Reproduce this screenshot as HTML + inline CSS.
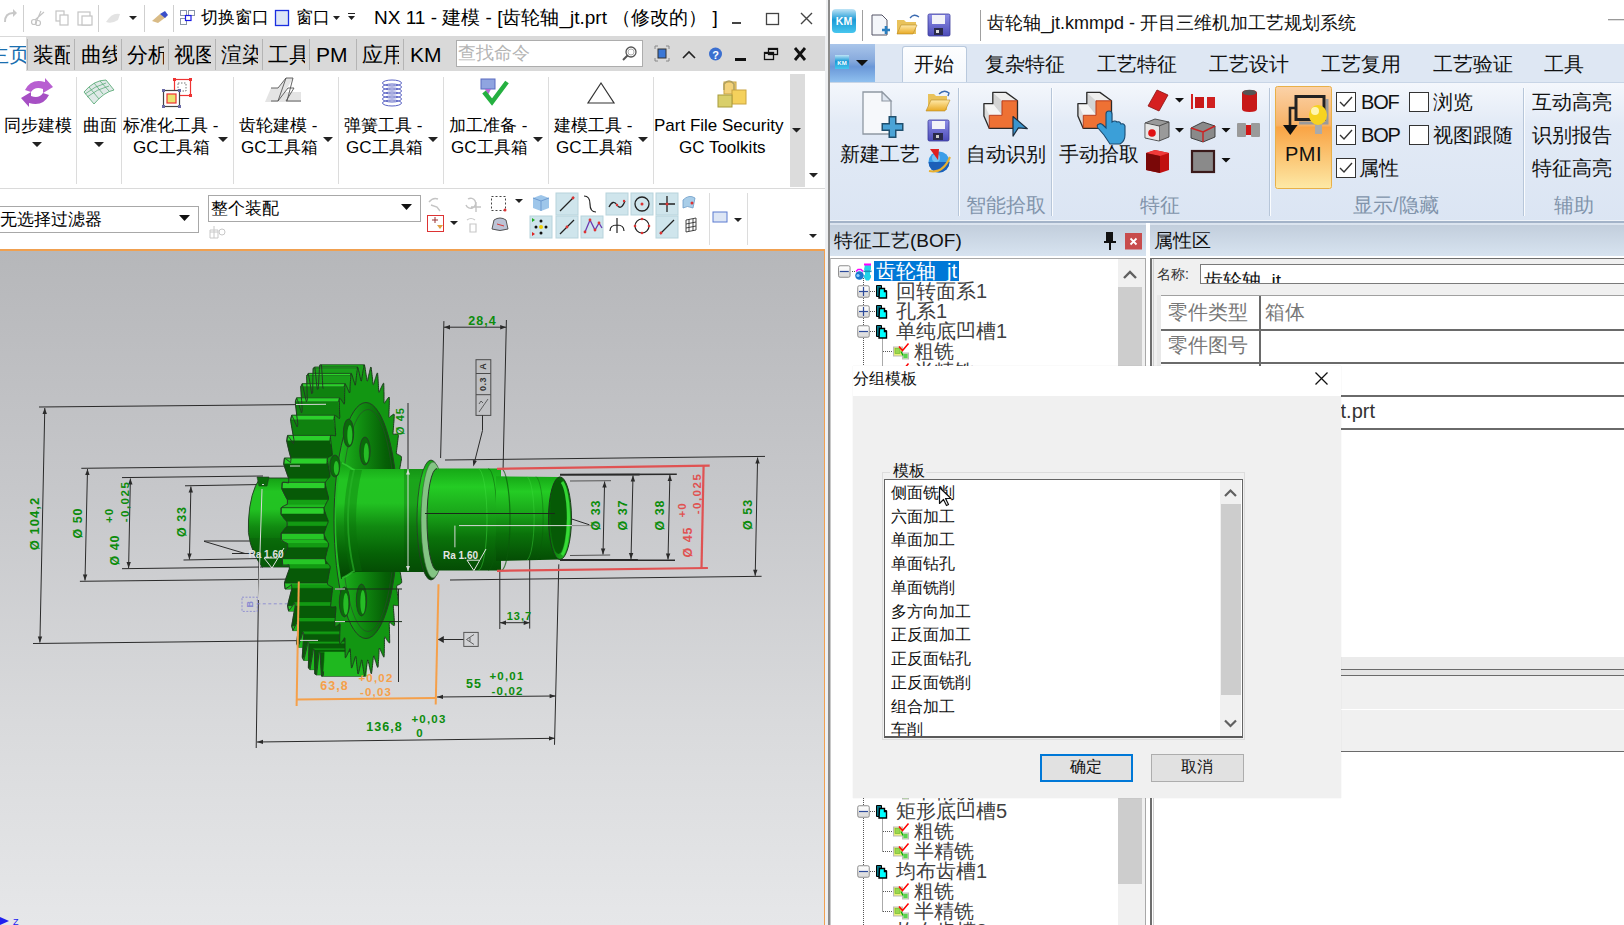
<!DOCTYPE html>
<html><head><meta charset="utf-8">
<style>
*{box-sizing:border-box;margin:0;padding:0}
html,body{width:1624px;height:925px;overflow:hidden;background:#fff;font-family:"Liberation Sans",sans-serif;color:#000}
.a{position:absolute}
.t{position:absolute;white-space:nowrap;line-height:1}
svg{position:absolute;overflow:visible}
</style></head><body>

<!-- ================= NX WINDOW ================= -->
<div class="a" id="nx" style="left:0;top:0;width:826px;height:925px;background:#fff;overflow:hidden">
  <!-- title bar -->
  <div class="a" style="left:0;top:0;width:826px;height:36px;background:#fff"></div>
  <!-- QAT icons -->
  <svg style="left:0;top:0" width="370" height="36">
    <g fill="none" stroke="#c8c8c8" stroke-width="2">
      <path d="M5 22 q0-9 8-9 l2 0" /><path d="M13 9 l4 4 -4 4" fill="#c8c8c8" stroke="none"/>
    </g>
    <g stroke="#cfcfcf" stroke-width="1">
      <line x1="23.5" y1="5" x2="23.5" y2="32"/><line x1="98.5" y1="5" x2="98.5" y2="32"/>
      <line x1="144.5" y1="5" x2="144.5" y2="32"/><line x1="173.5" y1="5" x2="173.5" y2="32"/>
    </g>
    <g fill="none" stroke="#c4c4c4" stroke-width="1.2">
      <circle cx="34" cy="22" r="2.5"/><circle cx="38" cy="23" r="2.5"/><path d="M35 20 L44 12 M37 20 L41 11"/>
      <rect x="56" y="11" width="8" height="10"/><rect x="60" y="15" width="8" height="10" fill="#fff"/>
      <rect x="78" y="12" width="12" height="13"/><rect x="82" y="16" width="10" height="9" fill="#fff"/>
    </g>
    <path d="M106 22 q6-10 14-8 l-2 6 q-6 4-12 2z" fill="#e3e3e3"/>
    <path d="M129 16 h8 l-4 4z" fill="#222"/>
    <path d="M152 21 l8-7 6 3 -8 6z" fill="#d9bb86"/><path d="M160 14 l5-3 3 4 -3 3z" fill="#3a4fc9"/>
    <g fill="#fff" stroke="#8a96a8" stroke-width="1"><rect x="180.5" y="10.5" width="6" height="5"/><rect x="188.5" y="10.5" width="6" height="5"/><rect x="180.5" y="18.5" width="6" height="6"/></g>
    <rect x="185.5" y="15.5" width="5.5" height="5" fill="#fff" stroke="#1a1ae6" stroke-width="1.2"/>
    <rect x="275.5" y="10.5" width="13" height="15" fill="#dde6f6" stroke="#1a2ee0" stroke-width="1.3"/>
    <path d="M333 16 h7 l-3.5 4z M348 13 h7 v1 h-7z M348 16 h7 l-3.5 4z" fill="#222"/>
  </svg>
  <div class="t" style="left:201px;top:9px;font-size:17px">切换窗口</div>
  <div class="t" style="left:296px;top:9px;font-size:17px">窗口</div>
  <div class="t" style="left:374px;top:8px;font-size:19px" id="nxtitle">NX 11 - 建模 - [齿轮轴_jt.prt （修改的） ]</div>
  <svg style="left:720px;top:0" width="106" height="36">
    <rect x="12" y="22" width="9" height="2" fill="#444"/>
    <rect x="46.5" y="13.5" width="12" height="11" fill="none" stroke="#444" stroke-width="1.3"/>
    <path d="M81 13 L92 24 M92 13 L81 24" stroke="#444" stroke-width="1.4"/>
  </svg>

  <!-- tabs -->
  <div class="a" style="left:0;top:36px;width:826px;height:35px;background:#d9d9d9"></div>
  <div class="a" style="left:0;top:37px;width:26px;height:34px;background:#fff"></div>
  <div class="t" style="left:-12px;top:44px;font-size:21px;color:#1a6fb0;width:38px;overflow:hidden">主页</div>
  <div id="nxtabs">
  <div class="t" style="left:33px;top:44px;font-size:21px;width:37px;overflow:hidden">装配</div>
  <div class="t" style="left:81px;top:44px;font-size:21px;width:36px;overflow:hidden">曲线</div>
  <div class="t" style="left:127px;top:44px;font-size:21px;width:37px;overflow:hidden">分析</div>
  <div class="t" style="left:174px;top:44px;font-size:21px;width:37px;overflow:hidden">视图</div>
  <div class="t" style="left:221px;top:44px;font-size:21px;width:37px;overflow:hidden">渲染</div>
  <div class="t" style="left:268px;top:44px;font-size:21px;width:37px;overflow:hidden">工具</div>
  <div class="t" style="left:316px;top:44px;font-size:21px;width:37px;overflow:hidden">PM</div>
  <div class="t" style="left:362px;top:44px;font-size:21px;width:37px;overflow:hidden">应用</div>
  <div class="t" style="left:410px;top:44px;font-size:21px;width:34px;overflow:hidden">KM</div>
  </div>
  <svg style="left:0;top:36px" width="460" height="35">
    <g stroke="#b4b4b4" stroke-width="1"><line x1="27.5" y1="3" x2="27.5" y2="34"/><line x1="74.5" y1="3" x2="74.5" y2="34"/><line x1="121.5" y1="3" x2="121.5" y2="34"/><line x1="168.5" y1="3" x2="168.5" y2="34"/><line x1="215.5" y1="3" x2="215.5" y2="34"/><line x1="262.5" y1="3" x2="262.5" y2="34"/><line x1="309.5" y1="3" x2="309.5" y2="34"/><line x1="356.5" y1="3" x2="356.5" y2="34"/><line x1="403.5" y1="3" x2="403.5" y2="34"/></g>
  </svg>
  <!-- search -->
  <div class="a" style="left:456px;top:40px;width:187px;height:27px;background:#fff;border:1px solid #adadad"></div>
  <div class="t" style="left:458px;top:44px;font-size:18px;color:#b4b4b4">查找命令</div>
  <svg style="left:620px;top:44px" width="20" height="20"><circle cx="11" cy="8" r="5" fill="none" stroke="#555" stroke-width="1.3"/><circle cx="11" cy="8" r="3" fill="none" stroke="#999" stroke-width="0.8"/><path d="M7.5 11.5 L3 16" stroke="#555" stroke-width="2"/></svg>
  <svg style="left:650px;top:40px" width="176" height="30">
    <g stroke="#888" stroke-width="1" fill="none"><path d="M5 7 h-0 v-0 M5 6 v3 M5 6 h3 M16 6 h3 v3 M5 18 v3 h3 M19 18 v3 h-3"/></g>
    <rect x="8" y="9" width="8" height="9" fill="#3a77d6" stroke="#333" stroke-width="1"/>
    <path d="M33 18 l6-6 6 6" fill="none" stroke="#222" stroke-width="1.6"/>
    <circle cx="65.5" cy="14" r="6.5" fill="#3b6fd0"/><text x="65.5" y="18.5" font-size="11" font-weight="bold" fill="#fff" text-anchor="middle" font-family="Liberation Sans">?</text>
    <rect x="85" y="18" width="11" height="3" fill="#111"/>
    <g fill="none" stroke="#111" stroke-width="1.3"><rect x="114.5" y="12.5" width="9" height="7"/><rect x="118.5" y="8.5" width="9" height="6"/></g><rect x="118" y="8" width="10" height="2" fill="#111"/><rect x="114" y="12" width="10" height="2" fill="#111"/>
    <path d="M145 8 L155 20 M155 8 L145 20" stroke="#111" stroke-width="2.8"/>
  </svg>

  <!-- ribbon separators -->
  <svg style="left:0;top:70px" width="826" height="120">
    <g stroke="#dcdcdc" stroke-width="1"><line x1="76.5" y1="7" x2="76.5" y2="114"/><line x1="121.5" y1="7" x2="121.5" y2="114"/><line x1="233.5" y1="7" x2="233.5" y2="114"/><line x1="338.5" y1="7" x2="338.5" y2="114"/><line x1="443.5" y1="7" x2="443.5" y2="114"/><line x1="548.5" y1="7" x2="548.5" y2="114"/><line x1="653.5" y1="7" x2="653.5" y2="114"/></g>
    <line x1="0" y1="118.5" x2="826" y2="118.5" stroke="#dadada"/>
    <rect x="790" y="4" width="15" height="113" fill="#dcdcdc"/>
    <g fill="#222"><path d="M32 72 h10 l-5 5z M94 72 h10 l-5 5z M218 67 h10 l-5 5z M323 67 h10 l-5 5z M428 67 h10 l-5 5z M533 67 h10 l-5 5z M638 67 h10 l-5 5z M792 58 h9 l-4.5 4.5z M809 103 h9 l-4.5 4.5z"/></g>
  </svg>
  <!-- ribbon icons -->
  <svg style="left:0;top:70px" width="790" height="50">
    <!-- sync arrows -->
    <path d="M25 20 q6-12 20-8 l0-4 8 9 -10 6 0-4 q-8-3-12 3z" fill="#b85fd1"/>
    <path d="M49 25 q-6 12-20 8 l0 4 -8-9 10-6 0 4 q8 3 12-3z" fill="#a64fc4"/>
    <!-- surface -->
    <path d="M84 22 q10-12 22-12 l8 10 q-10 2-20 14z" fill="#dfe9e7" stroke="#4aa36a" stroke-width="0.8"/>
    <g stroke="#4aa36a" stroke-width="0.7" fill="none"><path d="M89 17 l10 12 M94 13 l9 11 M100 11 l9 10 M87 27 q10-8 22-11 M85 24 q10-8 21-11"/></g>
    <!-- std tools -->
    <rect x="174.5" y="9.5" width="16" height="16" fill="#fff" stroke="#e33" stroke-width="1.2"/>
    <rect x="178" y="13" width="8" height="8" fill="none" stroke="#555" stroke-dasharray="1.5 1.5" stroke-width="0.8"/>
    <rect x="163.5" y="20.5" width="16" height="16" fill="#fff" stroke="#444" stroke-width="1.2"/>
    <rect x="167" y="24" width="9" height="9" fill="#eae36f" stroke="#e33" stroke-width="1.2"/>
    <g fill="#6a6aa6"><rect x="162" y="19" width="3" height="3"/><rect x="178" y="19" width="3" height="3"/><rect x="162" y="35" width="3" height="3"/><rect x="178" y="35" width="3" height="3"/></g>
    <g fill="#e33"><rect x="173" y="8" width="3" height="3"/><rect x="189" y="8" width="3" height="3"/><rect x="189" y="24" width="3" height="3"/></g>
    <!-- gear modelling -->
    <path d="M271 18 h7 l8-10 h7 l-8 14 h16 v10 h-36z" fill="#e4e4e4"/>
    <path d="M271 31 h7 l10-13 h6 l-8 13 h15 M271 18 h7 l8-10 h7" fill="none" stroke="#555" stroke-width="0.9"/>
    <path d="M286 8 l-8 23 M293 8 l-6 23" stroke="#555" stroke-width="0.9"/>
    <!-- spring -->
    <g fill="none" stroke="#5a63c4" stroke-width="1"><ellipse cx="392" cy="13" rx="9.5" ry="3"/><ellipse cx="392" cy="17" rx="9.5" ry="3"/><ellipse cx="392" cy="21" rx="9.5" ry="3"/><ellipse cx="392" cy="25" rx="9.5" ry="3"/><ellipse cx="392" cy="29" rx="9.5" ry="3"/><ellipse cx="392" cy="33" rx="9.5" ry="3"/></g>
    <!-- machining prep -->
    <rect x="481" y="9" width="14" height="10" fill="#8fa4e0" stroke="#5a6bc0"/>
    <path d="M485 19 h6 l-3 6z" fill="#b56ad6"/>
    <path d="M484 22 l8 10 l15-20" fill="none" stroke="#25b040" stroke-width="4.5"/>
    <!-- triangle -->
    <path d="M601 13 L614 33 H588z" fill="none" stroke="#333" stroke-width="1.2"/>
    <!-- lock -->
    <rect x="724" y="12" width="12" height="12" fill="#f3d27a" stroke="#c9a440"/>
    <rect x="732" y="20" width="14" height="14" fill="#f5d15c" stroke="#c9a440"/>
    <path d="M724 20 v-6 q5-6 10 0 v6" fill="none" stroke="#b0a060" stroke-width="1.5"/>
    <rect x="718" y="25" width="14" height="12" fill="#d9cf6a" stroke="#a89b3c"/>
  </svg>
  <div id="nxrib">
  <div class="t" style="left:4px;top:117px;font-size:17px">同步建模</div>
  <div class="t" style="left:83px;top:117px;font-size:17px">曲面</div>
  <div class="t" style="left:123px;top:117px;font-size:17px">标准化工具 -</div>
  <div class="t" style="left:133px;top:139px;font-size:17px">GC工具箱</div>
  <div class="t" style="left:239px;top:117px;font-size:17px">齿轮建模 -</div>
  <div class="t" style="left:241px;top:139px;font-size:17px">GC工具箱</div>
  <div class="t" style="left:344px;top:117px;font-size:17px">弹簧工具 -</div>
  <div class="t" style="left:346px;top:139px;font-size:17px">GC工具箱</div>
  <div class="t" style="left:449px;top:117px;font-size:17px">加工准备 -</div>
  <div class="t" style="left:451px;top:139px;font-size:17px">GC工具箱</div>
  <div class="t" style="left:554px;top:117px;font-size:17px">建模工具 -</div>
  <div class="t" style="left:556px;top:139px;font-size:17px">GC工具箱</div>
  <div class="t" style="left:654px;top:117px;font-size:17px">Part File Security</div>
  <div class="t" style="left:679px;top:139px;font-size:17px">GC Toolkits</div>
  </div>

  <!-- toolbar row 2 -->
  <div class="a" style="left:-2px;top:206px;width:201px;height:27px;background:#fff;border:1px solid #a8a8a8"></div>
  <div class="t" style="left:0px;top:211px;font-size:17px">无选择过滤器</div>
  <svg style="left:178px;top:214px" width="14" height="10"><path d="M1 1h11l-5.5 6z" fill="#111"/></svg>
  <div class="a" style="left:208px;top:195px;width:213px;height:27px;background:#fff;border:1px solid #a8a8a8"></div>
  <div class="t" style="left:211px;top:200px;font-size:17px">整个装配</div>
  <svg style="left:400px;top:203px" width="14" height="10"><path d="M1 1h11l-5.5 6z" fill="#111"/></svg>
  <svg style="left:200px;top:188px" width="626" height="62">
    <g fill="none" stroke="#c8c8c8" stroke-width="1"><path d="M10 42 h8 v8 h-8z M14 38 v12 M10 44 h8"/><circle cx="22" cy="44" r="3"/></g>
    <!-- row1 -->
    <g fill="none" stroke="#c4c4c4" stroke-width="1.4"><path d="M229 14 q4-5 9-3 M231 17 l6 2 l3 4"/><path d="M268 11 a5 5 0 1 1 -2 6 M276 14 v10 M271 19 h10"/></g>
    <rect x="291.5" y="8.5" width="14" height="14" fill="none" stroke="#444" stroke-dasharray="2 2"/><circle cx="305" cy="22" r="1.5" fill="#d33"/>
    <path d="M315 11h8l-4 4z" fill="#222"/>
    <path d="M333 10 l8-3 8 3 v10 l-8 3 -8-3z" fill="#9ec6ea"/><path d="M333 10 l8 3 8-3 M341 13 v10" stroke="#6e9bd1" fill="none"/>
    <rect x="356" y="5" width="22" height="22" fill="#cfe5ec" stroke="#b7d3dc"/>
    <path d="M360 23 L374 9" stroke="#222" stroke-width="1.2"/><circle cx="373" cy="10" r="1.4" fill="#d33"/>
    <path d="M384 8 q6 0 6 8 q0 8 6 8" fill="none" stroke="#222" stroke-width="1.2"/>
    <rect x="406" y="5" width="22" height="22" fill="#cfe5ec" stroke="#b7d3dc"/>
    <path d="M409 19 q4-8 8-2 t8-4" fill="none" stroke="#222" stroke-width="1.3"/><circle cx="417" cy="17" r="1.2" fill="#d33"/><circle cx="424" cy="13" r="1.2" fill="#d33"/>
    <rect x="431" y="5" width="22" height="22" fill="#cfe5ec" stroke="#b7d3dc"/>
    <circle cx="442" cy="16" r="7" fill="none" stroke="#222" stroke-width="1.3"/><circle cx="442" cy="16" r="1.5" fill="#d33"/>
    <rect x="456" y="5" width="22" height="22" fill="#cfe5ec" stroke="#b7d3dc"/>
    <path d="M467 8 v16 M459 16 h16" stroke="#222" stroke-width="1.3"/><circle cx="467" cy="16" r="1.5" fill="#d33"/>
    <path d="M483 12 q6-6 12-2 l-2 10 q-6-3-10 0z" fill="#a8cde8" stroke="#6a9bc8" stroke-width="0.8"/><circle cx="492" cy="15" r="1.5" fill="#d33"/>
    <!-- row2 -->
    <rect x="227.5" y="27.5" width="16" height="16" fill="none" stroke="#d33" stroke-width="1"/>
    <path d="M232 32 h6 M235 29 v6" stroke="#933" stroke-width="1"/><path d="M237 37 h6 l-3 4z" fill="#e0a040"/>
    <path d="M250 33h8l-4 4z" fill="#222"/>
    <g fill="none" stroke="#c8c8c8" stroke-width="1.2"><path d="M267 32 q4-3 8 0 M270 36 h6 v8 h-6z"/></g>
    <path d="M292 41 l2-9 q6-4 12 0 l2 9 q-8 3-16 0z" fill="#bcc3d6" stroke="#555" stroke-width="1"/><path d="M297 36 l7 2" stroke="#d33"/>
    <rect x="330" y="28" width="22" height="22" fill="#cfe5ec" stroke="#b7d3dc"/>
    <g fill="#111"><circle cx="341" cy="33" r="1.5"/><circle cx="336" cy="39" r="1.5"/><circle cx="346" cy="39" r="1.5"/><circle cx="341" cy="45" r="1.5"/></g><circle cx="341" cy="39" r="2" fill="#f0d000"/><path d="M332 30 l3 2 -3 2z" fill="#2a2"/><path d="M332 44 l3 2 -3 2z" fill="#d22"/>
    <rect x="356" y="28" width="22" height="22" fill="#cfe5ec" stroke="#b7d3dc"/>
    <path d="M360 46 L374 32" stroke="#222" stroke-width="1.2"/><circle cx="367" cy="39" r="1.4" fill="#d33"/>
    <rect x="381" y="28" width="22" height="22" fill="#cfe5ec" stroke="#b7d3dc"/>
    <path d="M385 44 l5-12 5 10 4-7 3 5" fill="none" stroke="#6a3ab0" stroke-width="1.3"/><g fill="#d33"><circle cx="385" cy="44" r="1.4"/><circle cx="390" cy="32" r="1.4"/><circle cx="395" cy="42" r="1.4"/><circle cx="399" cy="35" r="1.4"/></g>
    <path d="M410 43 q0-6 7-6 q7 0 7 6 M417 30 v15" fill="none" stroke="#222" stroke-width="1.2"/>
    <circle cx="442" cy="38" r="7" fill="none" stroke="#222" stroke-width="1.2"/><g fill="#d33"><circle cx="442" cy="31" r="1.3"/><circle cx="435" cy="38" r="1.3"/><circle cx="449" cy="38" r="1.3"/><circle cx="442" cy="45" r="1.3"/></g>
    <rect x="456" y="28" width="22" height="22" fill="#cfe5ec" stroke="#b7d3dc"/>
    <path d="M460 46 L474 32" stroke="#222" stroke-width="1.2"/><circle cx="461" cy="45" r="1.4" fill="#d33"/>
    <g fill="none" stroke="#333" stroke-width="0.9"><path d="M486 32 l10 -2 v12 l-10 2z M486 36 l10-2 M486 40 l10-2 M489 31 v12 M493 31 v12"/></g>
    <line x1="509.5" y1="5" x2="509.5" y2="57" stroke="#dcdcdc"/>
    <rect x="513" y="24" width="14" height="10" fill="#dde6f5" stroke="#5a7ad0"/>
    <path d="M534 30h8l-4 4z" fill="#222"/>
    <line x1="547.5" y1="5" x2="547.5" y2="57" stroke="#dcdcdc"/>
    <path d="M609 46h8l-4 4z" fill="#222"/>
  </svg>
  <!-- viewport -->
  <svg style="left:0;top:251px" width="824" height="674" viewBox="0 251 824 674">
  <rect x="0" y="251" width="824" height="674" fill="url(#vpbg)"/>
  <g id="dimsb">
<line x1="39.0" y1="407.0" x2="330.0" y2="404.3" stroke="#2a2a2a" stroke-width="1.0"/>
<line x1="33.0" y1="643.5" x2="320.0" y2="640.4" stroke="#2a2a2a" stroke-width="1.0"/>
<line x1="44.8" y1="408.0" x2="39.9" y2="642.5" stroke="#2a2a2a" stroke-width="1.0"/>
<path d="M44.8 408.0 L46.9 414.0 L42.5 414.0z" fill="#2a2a2a"/>
<path d="M39.9 642.5 L37.8 636.5 L42.2 636.5z" fill="#2a2a2a"/>
<line x1="81.3" y1="468.3" x2="300.0" y2="466.0" stroke="#2a2a2a" stroke-width="1.0"/>
<line x1="79.9" y1="581.3" x2="300.0" y2="579.0" stroke="#2a2a2a" stroke-width="1.0"/>
<line x1="87.5" y1="469.0" x2="85.0" y2="580.5" stroke="#2a2a2a" stroke-width="1.0"/>
<path d="M87.5 469.0 L89.6 475.0 L85.2 474.9z" fill="#2a2a2a"/>
<path d="M85.0 580.5 L82.9 574.5 L87.3 574.6z" fill="#2a2a2a"/>
<line x1="122.0" y1="477.6" x2="263.0" y2="476.0" stroke="#2a2a2a" stroke-width="1.0"/>
<line x1="122.0" y1="568.7" x2="263.0" y2="567.0" stroke="#2a2a2a" stroke-width="1.0"/>
<line x1="130.4" y1="478.5" x2="128.6" y2="568.0" stroke="#2a2a2a" stroke-width="1.0"/>
<path d="M130.4 478.5 L132.5 484.5 L128.1 484.5z" fill="#2a2a2a"/>
<path d="M128.6 568.0 L126.5 562.0 L130.9 562.0z" fill="#2a2a2a"/>
<line x1="185.0" y1="485.8" x2="262.0" y2="484.5" stroke="#2a2a2a" stroke-width="1.0"/>
<line x1="183.5" y1="560.0" x2="262.0" y2="558.5" stroke="#2a2a2a" stroke-width="1.0"/>
<line x1="190.9" y1="486.5" x2="189.4" y2="559.5" stroke="#2a2a2a" stroke-width="1.0"/>
<path d="M190.9 486.5 L193.0 492.5 L188.6 492.5z" fill="#2a2a2a"/>
<path d="M189.4 559.5 L187.3 553.5 L191.7 553.5z" fill="#2a2a2a"/>
<line x1="204.0" y1="541.3" x2="245.0" y2="553.5" stroke="#2a2a2a" stroke-width="1.0"/>
<line x1="204.0" y1="541.0" x2="268.0" y2="541.0" stroke="#2a2a2a" stroke-width="1.0"/>
<line x1="232.0" y1="553.5" x2="262.0" y2="553.5" stroke="#2a2a2a" stroke-width="1.0"/>
<line x1="260.0" y1="489.0" x2="256.2" y2="748.0" stroke="#2a2a2a" stroke-width="1.0"/>
<line x1="257.0" y1="742.0" x2="555.0" y2="738.3" stroke="#2a2a2a" stroke-width="1.0"/>
<path d="M257.0 742.0 L263.0 739.7 L263.0 744.1z" fill="#2a2a2a"/>
<path d="M555.0 738.3 L549.0 740.6 L549.0 736.2z" fill="#2a2a2a"/>
<line x1="558.8" y1="564.3" x2="554.5" y2="744.8" stroke="#2a2a2a" stroke-width="1.0"/>
<line x1="437.0" y1="697.0" x2="555.6" y2="696.0" stroke="#2a2a2a" stroke-width="1.0"/>
<path d="M437.0 697.0 L443.0 694.7 L443.0 699.1z" fill="#2a2a2a"/>
<path d="M555.6 696.0 L549.6 698.3 L549.6 693.9z" fill="#2a2a2a"/>
<path d="M437.8 639.5 L443.8 636.0 L443.8 643.0z" fill="#2a2a2a"/>
<line x1="437.8" y1="639.5" x2="463.8" y2="639.5" stroke="#2a2a2a" stroke-width="1.0"/>
<rect x="463.8" y="632.4" width="14.4" height="14" fill="none" stroke="#555" stroke-width="1"/>
<path d="M474 634.5 L466.5 639.5 474 644.5 M470 637.5 v4" fill="none" stroke="#555" stroke-width="0.9"/>
<line x1="499.8" y1="561.0" x2="499.8" y2="629.0" stroke="#2a2a2a" stroke-width="1.0"/>
<line x1="529.7" y1="558.0" x2="529.7" y2="628.6" stroke="#2a2a2a" stroke-width="1.0"/>
<line x1="500.0" y1="622.7" x2="529.7" y2="622.7" stroke="#2a2a2a" stroke-width="1.0"/>
<path d="M500.0 622.7 L506.0 620.5 L506.0 624.9z" fill="#2a2a2a"/>
<path d="M529.7 622.7 L523.7 624.9 L523.7 620.5z" fill="#2a2a2a"/>
<line x1="443.9" y1="321.1" x2="440.6" y2="458.0" stroke="#2a2a2a" stroke-width="1.0"/>
<line x1="506.4" y1="320.0" x2="503.1" y2="468.0" stroke="#2a2a2a" stroke-width="1.0"/>
<line x1="444.0" y1="327.2" x2="506.2" y2="327.2" stroke="#2a2a2a" stroke-width="1.0"/>
<path d="M444.0 327.2 L450.0 325.0 L450.0 329.4z" fill="#2a2a2a"/>
<path d="M506.2 327.2 L500.2 329.4 L500.2 325.0z" fill="#2a2a2a"/>
<rect x="476" y="359.7" width="14.8" height="55.7" fill="none" stroke="#4a4a4a" stroke-width="1"/>
<line x1="476.0" y1="373.5" x2="490.8" y2="373.5" stroke="#4a4a4a" stroke-width="1.0"/>
<line x1="476.0" y1="394.7" x2="490.8" y2="394.7" stroke="#4a4a4a" stroke-width="1.0"/>
<text x="483.4" y="366.6" transform="rotate(-90 483.4 366.6)" fill="#333" font-size="9" font-family="Liberation Sans" font-weight="bold" text-anchor="middle" dominant-baseline="central" letter-spacing="0">A</text>
<text x="483.4" y="384.1" transform="rotate(-90 483.4 384.1)" fill="#333" font-size="9" font-family="Liberation Sans" font-weight="bold" text-anchor="middle" dominant-baseline="central" letter-spacing="0.5">0.3</text>
<path d="M479 412 L488 399 M479 404 l2 -3 2 2" fill="none" stroke="#444" stroke-width="0.8"/>
<path d="M482.5 415.4 L482.5 430.5 L474.5 462" fill="none" stroke="#2a2a2a" stroke-width="1"/>
<path d="M473.3 466.4 L472.9 460.1 L476.8 461.1z" fill="#2a2a2a"/>
<line x1="445.0" y1="460.0" x2="765.0" y2="456.4" stroke="#2a2a2a" stroke-width="1.0"/>
<line x1="450.0" y1="580.0" x2="761.6" y2="576.3" stroke="#2a2a2a" stroke-width="1.0"/>
<line x1="757.6" y1="457.5" x2="755.2" y2="575.8" stroke="#2a2a2a" stroke-width="1.0"/>
<path d="M757.6 457.5 L759.7 463.5 L755.3 463.5z" fill="#2a2a2a"/>
<path d="M755.2 575.8 L753.1 569.8 L757.5 569.8z" fill="#2a2a2a"/>
<line x1="560.0" y1="474.6" x2="676.8" y2="474.3" stroke="#2a2a2a" stroke-width="1.6"/>
<line x1="560.0" y1="560.2" x2="675.0" y2="560.2" stroke="#2a2a2a" stroke-width="1.6"/>
<line x1="669.9" y1="475.0" x2="668.0" y2="559.5" stroke="#2a2a2a" stroke-width="1.0"/>
<path d="M669.9 475.0 L672.0 481.0 L667.6 480.9z" fill="#2a2a2a"/>
<path d="M668.0 559.5 L665.9 553.5 L670.3 553.6z" fill="#2a2a2a"/>
<line x1="560.0" y1="474.8" x2="639.6" y2="474.6" stroke="#2a2a2a" stroke-width="1.6"/>
<line x1="560.0" y1="559.9" x2="637.9" y2="559.7" stroke="#2a2a2a" stroke-width="1.6"/>
<line x1="633.0" y1="475.5" x2="631.0" y2="559.0" stroke="#2a2a2a" stroke-width="1.0"/>
<path d="M633.0 475.5 L635.1 481.6 L630.7 481.4z" fill="#2a2a2a"/>
<path d="M631.0 559.0 L628.9 552.9 L633.3 553.1z" fill="#2a2a2a"/>
<line x1="570.0" y1="481.0" x2="611.0" y2="480.7" stroke="#555" stroke-width="1.0"/>
<line x1="570.0" y1="555.5" x2="610.2" y2="555.0" stroke="#555" stroke-width="1.0"/>
<line x1="604.6" y1="481.5" x2="603.0" y2="554.5" stroke="#2a2a2a" stroke-width="1.0"/>
<path d="M604.6 481.5 L606.7 487.5 L602.3 487.5z" fill="#2a2a2a"/>
<path d="M603.0 554.5 L600.9 548.5 L605.3 548.5z" fill="#2a2a2a"/>
<line x1="555.0" y1="513.5" x2="589.4" y2="524.8" stroke="#2a2a2a" stroke-width="1.0"/>
<line x1="572.0" y1="525.6" x2="598.0" y2="525.6" stroke="#888" stroke-width="1"/>
<line x1="408.0" y1="403.0" x2="408.0" y2="469.0" stroke="#2a2a2a" stroke-width="1.0"/>
<line x1="398.5" y1="589.0" x2="398.5" y2="682.0" stroke="#2a2a2a" stroke-width="1.0"/>
<rect x="242" y="597.2" width="15.3" height="14.2" fill="none" stroke="#8a8ad0" stroke-width="0.9" stroke-dasharray="2 1.5"/>
<text x="249.6" y="604.3" transform="rotate(-90 249.6 604.3)" fill="#8a8ad0" font-size="9" font-family="Liberation Sans" font-weight="bold" text-anchor="middle" dominant-baseline="central" letter-spacing="0">B</text>
<line x1="257.3" y1="603.8" x2="292" y2="603.8" stroke="#8a8ad0" stroke-width="0.9" stroke-dasharray="3 2.5"/>
  </g>
  <g id="model">
<defs>
<linearGradient id="cyl" x1="0" y1="0" x2="0" y2="1">
 <stop offset="0" stop-color="#14a014"/><stop offset="0.15" stop-color="#22c422"/><stop offset="0.35" stop-color="#22c222"/>
 <stop offset="0.55" stop-color="#118a11"/><stop offset="0.78" stop-color="#066206"/><stop offset="1" stop-color="#034503"/>
</linearGradient>
<linearGradient id="cyl2" x1="0" y1="0" x2="0" y2="1">
 <stop offset="0" stop-color="#16a816"/><stop offset="0.18" stop-color="#24cc24"/><stop offset="0.42" stop-color="#1aa81a"/>
 <stop offset="0.68" stop-color="#0a720a"/><stop offset="1" stop-color="#044c04"/>
</linearGradient>
<linearGradient id="web" x1="0" y1="0" x2="1" y2="0">
 <stop offset="0" stop-color="#23c023"/><stop offset="0.35" stop-color="#139613"/><stop offset="0.8" stop-color="#066006"/><stop offset="1" stop-color="#055005"/>
</linearGradient>
<linearGradient id="endin" x1="0" y1="0" x2="1" y2="1">
 <stop offset="0" stop-color="#045004"/><stop offset="0.55" stop-color="#0a7a0a"/><stop offset="1" stop-color="#30d030"/>
</linearGradient>
<linearGradient id="vpbg" x1="0" y1="0" x2="0" y2="1">
 <stop offset="0" stop-color="#b6b7ba"/><stop offset="0.35" stop-color="#c6c7ca"/><stop offset="0.7" stop-color="#d9dadc"/><stop offset="1" stop-color="#e6e7e9"/>
</linearGradient>
</defs>
<path d="M266 478 L305 478 L305 567 L262 567 Q246 545 248.5 520 Q250 492 260 478z" fill="url(#cyl)" stroke="#233a23" stroke-width="0.9"/>
<path d="M257 477 l12 0 -2 9 -8 0z" fill="#0a6a0a" stroke="#233a23" stroke-width="0.6"/>
<path d="M249 538 L305 538 L305 567 L262 567z" fill="#0a650a" opacity="0.6"/>
<path d="M323.3 388.5 L323.0 388.5 L322.7 385.6 L322.5 380.4 L322.2 375.3 L321.8 370.1 L321.5 365.0 L321.1 365.0 L320.8 365.0 L320.4 365.1 L320.1 365.1 L319.7 365.5 L319.4 369.6 L319.2 373.8 L318.9 378.0 L318.7 382.1 L318.4 386.3 L318.2 388.9 L317.9 389.0 L317.6 389.2 L317.3 389.3 L316.9 386.4 L316.4 381.5 L315.9 376.6 L315.4 371.7 L314.8 367.1 L314.5 367.4 L314.1 367.6 L313.8 367.9 L313.4 368.1 L313.1 368.9 L313.0 373.2 L312.9 377.5 L312.8 381.8 L312.8 386.0 L312.7 390.3 L312.6 392.8 L312.3 393.1 L312.0 393.4 L311.7 393.8 L311.2 390.9 L310.5 386.4 L309.8 381.9 L309.0 377.4 L308.3 373.5 L308.0 373.9 L307.6 374.4 L307.3 374.8 L307.0 375.3 L306.7 376.5 L306.8 380.8 L306.9 385.1 L307.0 389.4 L307.1 393.6 L307.3 397.9 L307.2 400.2 L307.0 400.7 L306.7 401.2 L306.4 401.7 L305.7 399.0 L304.8 394.9 L303.9 391.0 L303.0 387.0 L302.2 383.8 L301.9 384.5 L301.6 385.2 L301.2 385.8 L300.9 386.5 L300.8 388.0 L301.0 392.2 L301.3 396.4 L301.6 400.5 L301.9 404.6 L302.2 408.7 L302.2 410.9 L302.0 411.6 L301.8 412.2 L301.5 412.9 L300.7 410.4 L299.6 407.0 L298.6 403.6 L297.5 400.3 L296.6 398.0 L296.3 398.8 L296.0 399.7 L295.7 400.5 L295.5 401.4 L295.4 403.1 L295.8 407.1 L296.3 411.1 L296.7 415.0 L297.2 418.8 L297.7 422.6 L297.8 424.6 L297.6 425.4 L297.4 426.2 L297.2 427.0 L296.2 424.9 L295.0 422.2 L293.8 419.6 L292.6 417.0 L291.6 415.4 L291.4 416.5 L291.2 417.5 L290.9 418.5 L290.7 419.5 L290.8 421.4 L291.4 425.1 L292.0 428.7 L292.6 432.2 L293.2 435.7 L293.9 439.2 L294.0 441.0 L293.8 441.9 L293.6 442.8 L293.5 443.7 L292.4 442.1 L291.1 440.2 L289.8 438.4 L288.5 436.6 L287.5 435.8 L287.3 436.9 L287.2 438.1 L287.0 439.3 L286.8 440.4 L287.0 442.4 L287.7 445.6 L288.5 448.8 L289.2 451.9 L290.0 454.9 L290.8 457.9 L291.0 459.5 L290.8 460.5 L290.7 461.5 L290.6 462.6 L289.3 461.6 L288.0 460.5 L286.6 459.5 L285.3 458.6 L284.4 458.5 L284.2 459.7 L284.1 461.0 L283.9 462.2 L283.8 463.5 L284.1 465.4 L285.0 468.1 L285.9 470.7 L286.8 473.3 L287.7 475.8 L288.6 478.2 L288.8 479.7 L288.7 480.8 L288.6 481.9 L288.5 483.0 L287.2 482.7 L285.8 482.5 L284.4 482.3 L283.0 482.3 L282.2 482.9 L282.1 484.2 L282.0 485.5 L282.0 486.8 L281.9 488.2 L282.3 489.9 L283.3 492.0 L284.3 494.0 L285.3 496.0 L286.3 497.9 L287.3 499.7 L287.5 501.0 L287.4 502.1 L287.4 503.2 L287.3 504.4 L285.9 504.9 L284.6 505.6 L283.2 506.3 L281.9 507.2 L281.1 508.3 L281.1 509.7 L281.1 511.0 L281.1 512.4 L281.0 513.7 L281.6 515.2 L282.7 516.6 L283.7 518.0 L284.8 519.3 L285.9 520.5 L286.9 521.7 L287.1 522.8 L287.1 524.0 L287.1 525.1 L287.0 526.3 L285.7 527.7 L284.4 529.2 L283.1 530.8 L281.8 532.5 L281.2 534.1 L281.2 535.4 L281.2 536.8 L281.3 538.1 L281.3 539.5 L282.0 540.5 L283.1 541.2 L284.2 541.9 L285.3 542.5 L286.4 543.0 L287.5 543.5 L287.7 544.6 L287.7 545.7 L287.8 546.9 L287.7 548.1 L286.4 550.4 L285.2 552.7 L284.0 555.1 L282.7 557.6 L282.3 559.4 L282.4 560.7 L282.5 562.1 L282.6 563.4 L282.7 564.7 L283.4 565.2 L284.6 565.2 L285.7 565.2 L286.8 565.1 L287.9 564.9 L289.0 564.7 L289.2 565.7 L289.3 566.8 L289.4 567.9 L289.2 569.3 L288.1 572.3 L287.0 575.4 L285.9 578.5 L284.8 581.8 L284.5 583.7 L284.6 585.0 L284.8 586.2 L284.9 587.4 L285.1 588.7 L285.9 588.6 L287.0 587.9 L288.1 587.2 L289.2 586.4 L290.3 585.5 L291.4 584.6 L291.5 585.6 L291.7 586.6 L291.8 587.6 L291.7 589.2 L290.7 592.9 L289.8 596.6 L288.8 600.4 L287.9 604.3 L287.7 606.3 L287.9 607.5 L288.1 608.6 L288.3 609.7 L288.5 610.8 L289.4 610.1 L290.5 608.7 L291.5 607.3 L292.6 605.8 L293.6 604.2 L294.6 602.8 L294.7 603.7 L294.9 604.6 L295.1 605.5 L295.0 607.3 L294.2 611.5 L293.4 615.8 L292.7 620.2 L291.9 624.6 L291.9 626.6 L292.1 627.5 L292.4 628.5 L292.6 629.5 L292.9 630.5 L293.7 629.0 L294.7 627.0 L295.7 624.9 L296.7 622.8 L297.6 620.6 L298.5 618.7 L298.7 619.5 L298.9 620.3 L299.1 621.0 L299.1 623.1 L298.5 627.8 L297.9 632.5 L297.3 637.3 L296.7 642.2 L296.8 643.9 L297.1 644.7 L297.4 645.5 L297.7 646.3 L298.0 647.1 L298.8 645.0 L299.7 642.4 L300.6 639.7 L301.4 637.0 L302.3 634.2 L303.0 632.0 L303.3 632.6 L303.5 633.2 L303.8 633.8 L303.8 636.1 L303.4 641.1 L303.0 646.2 L302.6 651.3 L302.3 656.4 L302.5 657.8 L302.8 658.4 L303.1 659.1 L303.4 659.7 L303.7 660.3 L304.5 657.5 L305.2 654.3 L306.0 651.1 L306.7 647.9 L307.4 644.6 L308.0 642.2 L308.3 642.6 L308.6 643.1 L308.9 643.5 L309.0 646.0 L308.8 651.2 L308.6 656.5 L308.5 661.7 L308.4 667.0 L308.6 668.0 L309.0 668.4 L309.3 668.8 L309.7 669.2 L310.0 669.6 L310.6 666.2 L311.2 662.6 L311.8 658.9 L312.4 655.3 L313.0 651.6 L313.5 649.0 L313.8 649.3 L314.0 649.5 L314.3 649.8 L314.5 652.5 L314.6 657.8 L314.6 663.0 L314.7 668.3 L314.8 673.6 L315.2 674.1 L315.5 674.3 L315.9 674.5 L316.2 674.7 L316.6 674.8 L317.0 670.8 L317.5 666.9 L317.9 662.9 L318.3 659.0 L318.7 655.0 L319.1 652.4 L319.4 652.4 L319.7 652.5 L320.0 652.5 L320.3 655.4 L320.5 660.6 L320.8 665.7 L321.2 670.9 L321.5 676.0 L321.9 676.0 L322.2 676.0 L322.6 675.9 L322.9 675.9 L323.3 675.5 L323.6 671.4 L364.5 676.0 L364.5 365.0z" fill="#0a5a0a"/>
<path d="M324.0 388.7 L323.7 388.6 L323.4 388.5 L323.2 388.5 L322.9 388.4 L365.9 388.4 L366.2 388.5 L366.4 388.5 L366.7 388.6 L367.0 388.7z" fill="#15a015" stroke="#15a015" stroke-width="0.4"/>
<path d="M322.9 388.4 L322.6 383.7 L322.4 379.0 L322.1 374.3 L321.8 369.7 L321.5 365.0 L364.5 365.0 L364.8 369.7 L365.1 374.3 L365.4 379.0 L365.6 383.7 L365.9 388.4z" fill="#1fb81f" stroke="#1fb81f" stroke-width="0.4"/>
<path d="M321.5 365.0 L321.2 365.0 L320.8 365.0 L320.5 365.1 L320.1 365.1 L319.8 365.1 L362.8 365.1 L363.1 365.1 L363.5 365.1 L363.8 365.0 L364.2 365.0 L364.5 365.0z" fill="#2bd02b" stroke="#1c3a1c" stroke-width="0.8"/>
<path d="M319.8 365.1 L319.5 369.1 L319.2 373.0 L319.0 377.0 L318.7 381.0 L318.5 384.9 L318.3 388.9 L361.3 388.9 L361.5 384.9 L361.7 381.0 L362.0 377.0 L362.2 373.0 L362.5 369.1 L362.8 365.1z" fill="#1a9e1a" stroke="#1a9e1a" stroke-width="0.4"/>
<path d="M318.3 388.9 L318.0 389.0 L317.8 389.1 L317.5 389.2 L317.2 389.4 L360.2 389.4 L360.5 389.2 L360.8 389.1 L361.0 389.0 L361.3 388.9z" fill="#15a015" stroke="#15a015" stroke-width="0.4"/>
<path d="M317.2 389.4 L316.8 384.9 L316.3 380.4 L315.8 376.0 L315.3 371.5 L314.8 367.1 L357.8 367.1 L358.3 371.5 L358.8 376.0 L359.3 380.4 L359.8 384.9 L360.2 389.4z" fill="#1fb81f" stroke="#1fb81f" stroke-width="0.4"/>
<path d="M314.8 367.1 L314.5 367.3 L314.1 367.6 L313.8 367.8 L313.5 368.1 L313.1 368.4 L356.1 368.4 L356.5 368.1 L356.8 367.8 L357.1 367.6 L357.5 367.3 L357.8 367.1z" fill="#2bd02b" stroke="#1c3a1c" stroke-width="0.8"/>
<path d="M313.1 368.4 L313.0 372.4 L312.9 376.5 L312.8 380.6 L312.8 384.6 L312.7 388.7 L312.7 392.7 L355.7 392.7 L355.7 388.7 L355.8 384.6 L355.8 380.6 L355.9 376.5 L356.0 372.4 L356.1 368.4z" fill="#1a9e1a" stroke="#1a9e1a" stroke-width="0.4"/>
<path d="M312.7 392.7 L312.4 393.0 L312.2 393.3 L311.9 393.6 L311.6 393.9 L354.6 393.9 L354.9 393.6 L355.2 393.3 L355.4 393.0 L355.7 392.7z" fill="#15a015" stroke="#15a015" stroke-width="0.4"/>
<path d="M311.6 393.9 L311.0 389.7 L310.4 385.6 L309.7 381.5 L309.0 377.5 L308.3 373.4 L351.3 373.4 L352.0 377.5 L352.7 381.5 L353.4 385.6 L354.0 389.7 L354.6 393.9z" fill="#1fb81f" stroke="#1fb81f" stroke-width="0.4"/>
<path d="M308.3 373.4 L308.0 373.9 L307.7 374.3 L307.4 374.8 L307.0 375.2 L306.7 375.7 L349.7 375.7 L350.0 375.2 L350.4 374.8 L350.7 374.3 L351.0 373.9 L351.3 373.4z" fill="#2bd02b" stroke="#1c3a1c" stroke-width="0.8"/>
<path d="M306.7 375.7 L306.8 379.8 L306.9 383.9 L307.0 387.9 L307.1 392.0 L307.2 396.0 L307.4 400.0 L350.4 400.0 L350.2 396.0 L350.1 392.0 L350.0 387.9 L349.9 383.9 L349.8 379.8 L349.7 375.7z" fill="#1a9e1a" stroke="#1a9e1a" stroke-width="0.4"/>
<path d="M307.4 400.0 L307.1 400.4 L306.8 400.9 L306.6 401.4 L306.3 401.9 L349.3 401.9 L349.6 401.4 L349.8 400.9 L350.1 400.4 L350.4 400.0z" fill="#15a015" stroke="#15a015" stroke-width="0.4"/>
<path d="M306.3 401.9 L305.5 398.1 L304.7 394.5 L303.9 390.9 L303.1 387.3 L302.2 383.7 L345.2 383.7 L346.1 387.3 L346.9 390.9 L347.7 394.5 L348.5 398.1 L349.3 401.9z" fill="#1fb81f" stroke="#1fb81f" stroke-width="0.4"/>
<path d="M302.2 383.7 L301.9 384.4 L301.6 385.0 L301.3 385.7 L301.0 386.4 L300.7 387.0 L343.7 387.0 L344.0 386.4 L344.3 385.7 L344.6 385.0 L344.9 384.4 L345.2 383.7z" fill="#2bd02b" stroke="#1c3a1c" stroke-width="0.8"/>
<path d="M300.7 387.0 L301.0 391.0 L301.2 395.0 L301.5 398.9 L301.8 402.8 L302.1 406.7 L302.4 410.6 L345.4 410.6 L345.1 406.7 L344.8 402.8 L344.5 398.9 L344.2 395.0 L344.0 391.0 L343.7 387.0z" fill="#0f820f" stroke="#0f820f" stroke-width="0.4"/>
<path d="M302.4 410.6 L302.2 411.2 L301.9 411.8 L301.7 412.4 L301.5 413.1 L344.5 413.1 L344.7 412.4 L344.9 411.8 L345.2 411.2 L345.4 410.6z" fill="#15a015" stroke="#15a015" stroke-width="0.4"/>
<path d="M301.5 413.1 L300.5 409.9 L299.6 406.8 L298.6 403.7 L297.6 400.7 L296.6 397.8 L339.6 397.8 L340.6 400.7 L341.6 403.7 L342.6 406.8 L343.5 409.9 L344.5 413.1z" fill="#1fb81f" stroke="#1fb81f" stroke-width="0.4"/>
<path d="M296.6 397.8 L296.4 398.6 L296.1 399.4 L295.8 400.3 L295.5 401.1 L295.3 402.0 L338.3 402.0 L338.5 401.1 L338.8 400.3 L339.1 399.4 L339.4 398.6 L339.6 397.8z" fill="#2bd02b" stroke="#1c3a1c" stroke-width="0.8"/>
<path d="M295.3 402.0 L295.7 405.8 L296.1 409.5 L296.5 413.2 L297.0 416.9 L297.5 420.5 L297.9 424.1 L340.9 424.1 L340.5 420.5 L340.0 416.9 L339.5 413.2 L339.1 409.5 L338.7 405.8 L338.3 402.0z" fill="#0f820f" stroke="#0f820f" stroke-width="0.4"/>
<path d="M297.9 424.1 L297.7 424.9 L297.5 425.7 L297.3 426.4 L297.1 427.2 L340.1 427.2 L340.3 426.4 L340.5 425.7 L340.7 424.9 L340.9 424.1z" fill="#15a015" stroke="#15a015" stroke-width="0.4"/>
<path d="M297.1 427.2 L296.1 424.7 L295.0 422.2 L293.9 419.8 L292.8 417.5 L291.7 415.2 L334.7 415.2 L335.8 417.5 L336.9 419.8 L338.0 422.2 L339.1 424.7 L340.1 427.2z" fill="#1fb81f" stroke="#1fb81f" stroke-width="0.4"/>
<path d="M291.7 415.2 L291.5 416.2 L291.2 417.2 L291.0 418.2 L290.8 419.2 L290.6 420.2 L333.6 420.2 L333.8 419.2 L334.0 418.2 L334.2 417.2 L334.5 416.2 L334.7 415.2z" fill="#2bd02b" stroke="#1c3a1c" stroke-width="0.8"/>
<path d="M290.6 420.2 L291.1 423.7 L291.7 427.1 L292.3 430.5 L292.9 433.8 L293.5 437.1 L294.1 440.4 L337.1 440.4 L336.5 437.1 L335.9 433.8 L335.3 430.5 L334.7 427.1 L334.1 423.7 L333.6 420.2z" fill="#0f820f" stroke="#0f820f" stroke-width="0.4"/>
<path d="M294.1 440.4 L294.0 441.2 L293.8 442.1 L293.6 443.0 L293.5 443.9 L336.5 443.9 L336.6 443.0 L336.8 442.1 L337.0 441.2 L337.1 440.4z" fill="#15a015" stroke="#15a015" stroke-width="0.4"/>
<path d="M293.5 443.9 L292.3 442.1 L291.1 440.3 L290.0 438.6 L288.8 437.0 L287.6 435.4 L330.6 435.4 L331.8 437.0 L333.0 438.6 L334.1 440.3 L335.3 442.1 L336.5 443.9z" fill="#1fb81f" stroke="#1fb81f" stroke-width="0.4"/>
<path d="M287.6 435.4 L287.4 436.6 L287.2 437.7 L287.0 438.8 L286.9 440.0 L286.7 441.1 L329.7 441.1 L329.9 440.0 L330.0 438.8 L330.2 437.7 L330.4 436.6 L330.6 435.4z" fill="#2bd02b" stroke="#1c3a1c" stroke-width="0.8"/>
<path d="M286.7 441.1 L287.4 444.2 L288.1 447.2 L288.8 450.2 L289.6 453.1 L290.3 455.9 L291.1 458.7 L334.1 458.7 L333.3 455.9 L332.6 453.1 L331.8 450.2 L331.1 447.2 L330.4 444.2 L329.7 441.1z" fill="#075a07" stroke="#075a07" stroke-width="0.4"/>
<path d="M291.1 458.7 L290.9 459.7 L290.8 460.7 L290.7 461.7 L290.5 462.6 L333.5 462.6 L333.7 461.7 L333.8 460.7 L333.9 459.7 L334.1 458.7z" fill="#15a015" stroke="#15a015" stroke-width="0.4"/>
<path d="M290.5 462.6 L289.3 461.6 L288.1 460.6 L286.9 459.7 L285.7 458.8 L284.4 458.0 L327.4 458.0 L328.7 458.8 L329.9 459.7 L331.1 460.6 L332.3 461.6 L333.5 462.6z" fill="#1fb81f" stroke="#1fb81f" stroke-width="0.4"/>
<path d="M284.4 458.0 L284.3 459.3 L284.1 460.5 L284.0 461.7 L283.9 463.0 L283.7 464.2 L326.7 464.2 L326.9 463.0 L327.0 461.7 L327.1 460.5 L327.3 459.3 L327.4 458.0z" fill="#2bd02b" stroke="#1c3a1c" stroke-width="0.8"/>
<path d="M283.7 464.2 L284.6 466.8 L285.4 469.3 L286.3 471.8 L287.1 474.2 L288.0 476.5 L288.8 478.8 L331.8 478.8 L331.0 476.5 L330.1 474.2 L329.3 471.8 L328.4 469.3 L327.6 466.8 L326.7 464.2z" fill="#075a07" stroke="#075a07" stroke-width="0.4"/>
<path d="M288.8 478.8 L288.7 479.9 L288.7 480.9 L288.6 481.9 L288.5 483.0 L331.5 483.0 L331.6 481.9 L331.7 480.9 L331.7 479.9 L331.8 478.8z" fill="#15a015" stroke="#15a015" stroke-width="0.4"/>
<path d="M288.5 483.0 L287.2 482.7 L286.0 482.5 L284.7 482.4 L283.5 482.3 L282.2 482.3 L325.2 482.3 L326.5 482.3 L327.7 482.4 L329.0 482.5 L330.2 482.7 L331.5 483.0z" fill="#1fb81f" stroke="#1fb81f" stroke-width="0.4"/>
<path d="M282.2 482.3 L282.2 483.6 L282.1 484.9 L282.0 486.2 L281.9 487.5 L281.8 488.8 L324.8 488.8 L324.9 487.5 L325.0 486.2 L325.1 484.9 L325.2 483.6 L325.2 482.3z" fill="#2bd02b" stroke="#1c3a1c" stroke-width="0.8"/>
<path d="M281.8 488.8 L282.8 490.9 L283.7 492.8 L284.6 494.7 L285.6 496.6 L286.5 498.3 L287.5 500.0 L330.5 500.0 L329.5 498.3 L328.6 496.6 L327.6 494.7 L326.7 492.8 L325.8 490.9 L324.8 488.8z" fill="#075a07" stroke="#075a07" stroke-width="0.4"/>
<path d="M287.5 500.0 L287.4 501.1 L287.4 502.2 L287.4 503.3 L287.3 504.4 L330.3 504.4 L330.4 503.3 L330.4 502.2 L330.4 501.1 L330.5 500.0z" fill="#15a015" stroke="#15a015" stroke-width="0.4"/>
<path d="M287.3 504.4 L286.1 504.9 L284.9 505.5 L283.6 506.1 L282.4 506.9 L281.1 507.7 L324.1 507.7 L325.4 506.9 L326.6 506.1 L327.9 505.5 L329.1 504.9 L330.3 504.4z" fill="#1fb81f" stroke="#1fb81f" stroke-width="0.4"/>
<path d="M281.1 507.7 L281.1 509.0 L281.1 510.3 L281.1 511.7 L281.0 513.0 L281.0 514.3 L324.0 514.3 L324.0 513.0 L324.1 511.7 L324.1 510.3 L324.1 509.0 L324.1 507.7z" fill="#2bd02b" stroke="#1c3a1c" stroke-width="0.8"/>
<path d="M281.0 514.3 L282.0 515.7 L283.0 517.1 L284.0 518.4 L285.1 519.6 L286.1 520.7 L287.1 521.8 L330.1 521.8 L329.1 520.7 L328.1 519.6 L327.0 518.4 L326.0 517.1 L325.0 515.7 L324.0 514.3z" fill="#075a07" stroke="#075a07" stroke-width="0.4"/>
<path d="M287.1 521.8 L287.1 522.9 L287.1 524.0 L287.1 525.1 L287.1 526.2 L330.1 526.2 L330.1 525.1 L330.1 524.0 L330.1 522.9 L330.1 521.8z" fill="#139a13" stroke="#139a13" stroke-width="0.4"/>
<path d="M287.1 526.2 L285.9 527.5 L284.7 528.8 L283.5 530.3 L282.3 531.8 L281.1 533.3 L324.1 533.3 L325.3 531.8 L326.5 530.3 L327.7 528.8 L328.9 527.5 L330.1 526.2z" fill="#075a07" stroke="#075a07" stroke-width="0.4"/>
<path d="M281.1 533.3 L281.2 534.7 L281.2 536.0 L281.2 537.3 L281.3 538.7 L281.3 540.0 L324.3 540.0 L324.3 538.7 L324.2 537.3 L324.2 536.0 L324.2 534.7 L324.1 533.3z" fill="#26c626" stroke="#1c3a1c" stroke-width="0.8"/>
<path d="M281.3 540.0 L282.4 540.7 L283.4 541.4 L284.5 542.1 L285.5 542.6 L286.6 543.1 L287.6 543.5 L330.6 543.5 L329.6 543.1 L328.5 542.6 L327.5 542.1 L326.4 541.4 L325.4 540.7 L324.3 540.0z" fill="#1fb81f" stroke="#1fb81f" stroke-width="0.4"/>
<path d="M287.6 543.5 L287.7 544.6 L287.7 545.7 L287.8 546.8 L287.8 547.8 L330.8 547.8 L330.8 546.8 L330.7 545.7 L330.7 544.6 L330.6 543.5z" fill="#139a13" stroke="#139a13" stroke-width="0.4"/>
<path d="M287.8 547.8 L286.7 549.9 L285.6 552.0 L284.5 554.1 L283.3 556.4 L282.2 558.7 L325.2 558.7 L326.3 556.4 L327.5 554.1 L328.6 552.0 L329.7 549.9 L330.8 547.8z" fill="#075a07" stroke="#075a07" stroke-width="0.4"/>
<path d="M282.2 558.7 L282.3 560.0 L282.4 561.3 L282.5 562.5 L282.6 563.8 L282.7 565.1 L325.7 565.1 L325.6 563.8 L325.5 562.5 L325.4 561.3 L325.3 560.0 L325.2 558.7z" fill="#26c626" stroke="#1c3a1c" stroke-width="0.8"/>
<path d="M282.7 565.1 L283.8 565.2 L284.8 565.2 L285.9 565.2 L286.9 565.1 L288.0 564.9 L289.1 564.7 L332.1 564.7 L331.0 564.9 L329.9 565.1 L328.9 565.2 L327.8 565.2 L326.8 565.2 L325.7 565.1z" fill="#1fb81f" stroke="#1fb81f" stroke-width="0.4"/>
<path d="M289.1 564.7 L289.1 565.7 L289.2 566.7 L289.3 567.7 L289.5 568.8 L332.5 568.8 L332.3 567.7 L332.2 566.7 L332.1 565.7 L332.1 564.7z" fill="#139a13" stroke="#139a13" stroke-width="0.4"/>
<path d="M289.5 568.8 L288.4 571.5 L287.4 574.2 L286.4 577.1 L285.4 580.0 L284.4 583.0 L327.4 583.0 L328.4 580.0 L329.4 577.1 L330.4 574.2 L331.4 571.5 L332.5 568.8z" fill="#075a07" stroke="#075a07" stroke-width="0.4"/>
<path d="M284.4 583.0 L284.6 584.2 L284.7 585.4 L284.8 586.6 L285.0 587.8 L285.1 589.0 L328.1 589.0 L328.0 587.8 L327.8 586.6 L327.7 585.4 L327.6 584.2 L327.4 583.0z" fill="#26c626" stroke="#1c3a1c" stroke-width="0.8"/>
<path d="M285.1 589.0 L286.2 588.4 L287.2 587.8 L288.3 587.1 L289.3 586.3 L290.4 585.5 L291.4 584.6 L334.4 584.6 L333.4 585.5 L332.3 586.3 L331.3 587.1 L330.2 587.8 L329.2 588.4 L328.1 589.0z" fill="#1fb81f" stroke="#1fb81f" stroke-width="0.4"/>
<path d="M291.4 584.6 L291.5 585.5 L291.7 586.5 L291.8 587.4 L292.0 588.3 L335.0 588.3 L334.8 587.4 L334.7 586.5 L334.5 585.5 L334.4 584.6z" fill="#139a13" stroke="#139a13" stroke-width="0.4"/>
<path d="M292.0 588.3 L291.1 591.7 L290.2 595.1 L289.3 598.5 L288.4 602.0 L287.6 605.6 L330.6 605.6 L331.4 602.0 L332.3 598.5 L333.2 595.1 L334.1 591.7 L335.0 588.3z" fill="#075a07" stroke="#075a07" stroke-width="0.4"/>
<path d="M287.6 605.6 L287.8 606.7 L288.0 607.8 L288.2 608.9 L288.4 610.0 L288.6 611.1 L331.6 611.1 L331.4 610.0 L331.2 608.9 L331.0 607.8 L330.8 606.7 L330.6 605.6z" fill="#26c626" stroke="#1c3a1c" stroke-width="0.8"/>
<path d="M288.6 611.1 L289.6 609.8 L290.6 608.5 L291.6 607.1 L292.6 605.7 L293.6 604.2 L294.5 602.7 L337.5 602.7 L336.6 604.2 L335.6 605.7 L334.6 607.1 L333.6 608.5 L332.6 609.8 L331.6 611.1z" fill="#1fb81f" stroke="#1fb81f" stroke-width="0.4"/>
<path d="M294.5 602.7 L294.7 603.6 L294.9 604.4 L295.1 605.3 L295.3 606.1 L338.3 606.1 L338.1 605.3 L337.9 604.4 L337.7 603.6 L337.5 602.7z" fill="#139a13" stroke="#139a13" stroke-width="0.4"/>
<path d="M295.3 606.1 L294.5 609.9 L293.8 613.8 L293.1 617.8 L292.4 621.8 L291.7 625.8 L334.7 625.8 L335.4 621.8 L336.1 617.8 L336.8 613.8 L337.5 609.9 L338.3 606.1z" fill="#075a07" stroke="#075a07" stroke-width="0.4"/>
<path d="M291.7 625.8 L291.9 626.8 L292.2 627.8 L292.4 628.7 L292.7 629.7 L292.9 630.6 L335.9 630.6 L335.7 629.7 L335.4 628.7 L335.2 627.8 L334.9 626.8 L334.7 625.8z" fill="#26c626" stroke="#1c3a1c" stroke-width="0.8"/>
<path d="M292.9 630.6 L293.9 628.8 L294.8 626.8 L295.7 624.9 L296.6 622.8 L297.5 620.8 L298.4 618.6 L341.4 618.6 L340.5 620.8 L339.6 622.8 L338.7 624.9 L337.8 626.8 L336.9 628.8 L335.9 630.6z" fill="#1fb81f" stroke="#1fb81f" stroke-width="0.4"/>
<path d="M298.4 618.6 L298.6 619.4 L298.9 620.1 L299.1 620.8 L299.3 621.5 L342.3 621.5 L342.1 620.8 L341.9 620.1 L341.6 619.4 L341.4 618.6z" fill="#139a13" stroke="#139a13" stroke-width="0.4"/>
<path d="M299.3 621.5 L298.7 625.8 L298.2 630.1 L297.6 634.4 L297.1 638.8 L296.6 643.2 L339.6 643.2 L340.1 638.8 L340.6 634.4 L341.2 630.1 L341.7 625.8 L342.3 621.5z" fill="#075a07" stroke="#075a07" stroke-width="0.4"/>
<path d="M296.6 643.2 L296.9 644.0 L297.2 644.8 L297.5 645.6 L297.7 646.4 L298.0 647.2 L341.0 647.2 L340.7 646.4 L340.5 645.6 L340.2 644.8 L339.9 644.0 L339.6 643.2z" fill="#26c626" stroke="#1c3a1c" stroke-width="0.8"/>
<path d="M298.0 647.2 L298.9 644.8 L299.7 642.3 L300.5 639.7 L301.4 637.2 L302.2 634.5 L303.0 631.9 L346.0 631.9 L345.2 634.5 L344.4 637.2 L343.5 639.7 L342.7 642.3 L341.9 644.8 L341.0 647.2z" fill="#1fb81f" stroke="#1fb81f" stroke-width="0.4"/>
<path d="M303.0 631.9 L303.2 632.4 L303.4 633.0 L303.7 633.6 L303.9 634.2 L346.9 634.2 L346.7 633.6 L346.4 633.0 L346.2 632.4 L346.0 631.9z" fill="#139a13" stroke="#139a13" stroke-width="0.4"/>
<path d="M303.9 634.2 L303.6 638.7 L303.2 643.3 L302.9 647.9 L302.5 652.6 L302.2 657.3 L345.2 657.3 L345.5 652.6 L345.9 647.9 L346.2 643.3 L346.6 638.7 L346.9 634.2z" fill="#075a07" stroke="#075a07" stroke-width="0.4"/>
<path d="M302.2 657.3 L302.5 657.9 L302.8 658.5 L303.1 659.1 L303.5 659.7 L303.8 660.3 L346.8 660.3 L346.5 659.7 L346.1 659.1 L345.8 658.5 L345.5 657.9 L345.2 657.3z" fill="#26c626" stroke="#1c3a1c" stroke-width="0.8"/>
<path d="M303.8 660.3 L304.5 657.4 L305.2 654.4 L305.9 651.3 L306.6 648.3 L307.3 645.2 L308.0 642.1 L351.0 642.1 L350.3 645.2 L349.6 648.3 L348.9 651.3 L348.2 654.4 L347.5 657.4 L346.8 660.3z" fill="#1fb81f" stroke="#1fb81f" stroke-width="0.4"/>
<path d="M308.0 642.1 L308.2 642.5 L308.5 642.9 L308.8 643.3 L309.0 643.7 L352.0 643.7 L351.8 643.3 L351.5 642.9 L351.2 642.5 L351.0 642.1z" fill="#139a13" stroke="#139a13" stroke-width="0.4"/>
<path d="M309.0 643.7 L308.9 648.5 L308.7 653.2 L308.6 658.0 L308.4 662.8 L308.3 667.6 L351.3 667.6 L351.4 662.8 L351.6 658.0 L351.7 653.2 L351.9 648.5 L352.0 643.7z" fill="#075a07" stroke="#075a07" stroke-width="0.4"/>
<path d="M308.3 667.6 L308.7 668.0 L309.0 668.4 L309.3 668.8 L309.7 669.2 L310.0 669.6 L353.0 669.6 L352.7 669.2 L352.3 668.8 L352.0 668.4 L351.7 668.0 L351.3 667.6z" fill="#26c626" stroke="#1c3a1c" stroke-width="0.8"/>
<path d="M310.0 669.6 L310.6 666.2 L311.2 662.8 L311.8 659.4 L312.3 655.9 L312.9 652.5 L313.4 648.9 L356.4 648.9 L355.9 652.5 L355.3 655.9 L354.8 659.4 L354.2 662.8 L353.6 666.2 L353.0 669.6z" fill="#1fb81f" stroke="#1fb81f" stroke-width="0.4"/>
<path d="M313.4 648.9 L313.7 649.2 L313.9 649.4 L314.2 649.7 L314.5 649.9 L357.5 649.9 L357.2 649.7 L356.9 649.4 L356.7 649.2 L356.4 648.9z" fill="#139a13" stroke="#139a13" stroke-width="0.4"/>
<path d="M314.5 649.9 L314.5 654.7 L314.6 659.5 L314.6 664.3 L314.7 669.1 L314.8 673.9 L357.8 673.9 L357.7 669.1 L357.6 664.3 L357.6 659.5 L357.5 654.7 L357.5 649.9z" fill="#075a07" stroke="#075a07" stroke-width="0.4"/>
<path d="M314.8 673.9 L315.2 674.1 L315.5 674.3 L315.9 674.5 L316.2 674.7 L316.6 674.8 L359.6 674.8 L359.2 674.7 L358.9 674.5 L358.5 674.3 L358.2 674.1 L357.8 673.9z" fill="#26c626" stroke="#1c3a1c" stroke-width="0.8"/>
<path d="M316.6 674.8 L317.0 671.1 L317.4 667.4 L317.9 663.7 L318.2 659.9 L318.6 656.1 L319.0 652.3 L362.0 652.3 L361.6 656.1 L361.2 659.9 L360.9 663.7 L360.4 667.4 L360.0 671.1 L359.6 674.8z" fill="#1fb81f" stroke="#1fb81f" stroke-width="0.4"/>
<path d="M319.0 652.3 L319.3 652.4 L319.6 652.5 L319.8 652.5 L320.1 652.6 L363.1 652.6 L362.8 652.5 L362.6 652.5 L362.3 652.4 L362.0 652.3z" fill="#139a13" stroke="#139a13" stroke-width="0.4"/>
<path d="M320.1 652.6 L320.4 657.3 L320.6 662.0 L320.9 666.7 L321.2 671.3 L321.5 676.0 L364.5 676.0 L364.2 671.3 L363.9 666.7 L363.6 662.0 L363.4 657.3 L363.1 652.6z" fill="#075a07" stroke="#075a07" stroke-width="0.4"/>
<path d="M321.5 676.0 L321.8 676.0 L322.2 676.0 L322.5 675.9 L322.9 675.9 L323.2 675.9 L366.2 675.9 L365.9 675.9 L365.5 675.9 L365.2 676.0 L364.8 676.0 L364.5 676.0z" fill="#26c626" stroke="#1c3a1c" stroke-width="0.8"/>
<path d="M323.2 675.9 L323.5 671.9 L323.8 668.0 L324.0 664.0 L324.3 660.0 L324.5 656.1 L324.7 652.1 L367.7 652.1 L367.5 656.1 L367.3 660.0 L367.0 664.0 L366.8 668.0 L366.5 671.9 L366.2 675.9z" fill="#1fb81f" stroke="#1fb81f" stroke-width="0.4"/>
<path d="M323.3 388.5 L323.0 388.5 L322.7 385.6 L322.5 380.4 L322.2 375.3 L321.8 370.1 L321.5 365.0 L321.1 365.0 L320.8 365.0 L320.4 365.1 L320.1 365.1 L319.7 365.5 L319.4 369.6 L319.2 373.8 L318.9 378.0 L318.7 382.1 L318.4 386.3 L318.2 388.9 L317.9 389.0 L317.6 389.2 L317.3 389.3 L316.9 386.4 L316.4 381.5 L315.9 376.6 L315.4 371.7 L314.8 367.1 L314.5 367.4 L314.1 367.6 L313.8 367.9 L313.4 368.1 L313.1 368.9 L313.0 373.2 L312.9 377.5 L312.8 381.8 L312.8 386.0 L312.7 390.3 L312.6 392.8 L312.3 393.1 L312.0 393.4 L311.7 393.8 L311.2 390.9 L310.5 386.4 L309.8 381.9 L309.0 377.4 L308.3 373.5 L308.0 373.9 L307.6 374.4 L307.3 374.8 L307.0 375.3 L306.7 376.5 L306.8 380.8 L306.9 385.1 L307.0 389.4 L307.1 393.6 L307.3 397.9 L307.2 400.2 L307.0 400.7 L306.7 401.2 L306.4 401.7 L305.7 399.0 L304.8 394.9 L303.9 391.0 L303.0 387.0 L302.2 383.8 L301.9 384.5 L301.6 385.2 L301.2 385.8 L300.9 386.5 L300.8 388.0 L301.0 392.2 L301.3 396.4 L301.6 400.5 L301.9 404.6 L302.2 408.7 L302.2 410.9 L302.0 411.6 L301.8 412.2 L301.5 412.9 L300.7 410.4 L299.6 407.0 L298.6 403.6 L297.5 400.3 L296.6 398.0 L296.3 398.8 L296.0 399.7 L295.7 400.5 L295.5 401.4 L295.4 403.1 L295.8 407.1 L296.3 411.1 L296.7 415.0 L297.2 418.8 L297.7 422.6 L297.8 424.6 L297.6 425.4 L297.4 426.2 L297.2 427.0 L296.2 424.9 L295.0 422.2 L293.8 419.6 L292.6 417.0 L291.6 415.4 L291.4 416.5 L291.2 417.5 L290.9 418.5 L290.7 419.5 L290.8 421.4 L291.4 425.1 L292.0 428.7 L292.6 432.2 L293.2 435.7 L293.9 439.2 L294.0 441.0 L293.8 441.9 L293.6 442.8 L293.5 443.7 L292.4 442.1 L291.1 440.2 L289.8 438.4 L288.5 436.6 L287.5 435.8 L287.3 436.9 L287.2 438.1 L287.0 439.3 L286.8 440.4 L287.0 442.4 L287.7 445.6 L288.5 448.8 L289.2 451.9 L290.0 454.9 L290.8 457.9 L291.0 459.5 L290.8 460.5 L290.7 461.5 L290.6 462.6 L289.3 461.6 L288.0 460.5 L286.6 459.5 L285.3 458.6 L284.4 458.5 L284.2 459.7 L284.1 461.0 L283.9 462.2 L283.8 463.5 L284.1 465.4 L285.0 468.1 L285.9 470.7 L286.8 473.3 L287.7 475.8 L288.6 478.2 L288.8 479.7 L288.7 480.8 L288.6 481.9 L288.5 483.0 L287.2 482.7 L285.8 482.5 L284.4 482.3 L283.0 482.3 L282.2 482.9 L282.1 484.2 L282.0 485.5 L282.0 486.8 L281.9 488.2 L282.3 489.9 L283.3 492.0 L284.3 494.0 L285.3 496.0 L286.3 497.9 L287.3 499.7 L287.5 501.0 L287.4 502.1 L287.4 503.2 L287.3 504.4 L285.9 504.9 L284.6 505.6 L283.2 506.3 L281.9 507.2 L281.1 508.3 L281.1 509.7 L281.1 511.0 L281.1 512.4 L281.0 513.7 L281.6 515.2 L282.7 516.6 L283.7 518.0 L284.8 519.3 L285.9 520.5 L286.9 521.7 L287.1 522.8 L287.1 524.0 L287.1 525.1 L287.0 526.3 L285.7 527.7 L284.4 529.2 L283.1 530.8 L281.8 532.5 L281.2 534.1 L281.2 535.4 L281.2 536.8 L281.3 538.1 L281.3 539.5 L282.0 540.5 L283.1 541.2 L284.2 541.9 L285.3 542.5 L286.4 543.0 L287.5 543.5 L287.7 544.6 L287.7 545.7 L287.8 546.9 L287.7 548.1 L286.4 550.4 L285.2 552.7 L284.0 555.1 L282.7 557.6 L282.3 559.4 L282.4 560.7 L282.5 562.1 L282.6 563.4 L282.7 564.7 L283.4 565.2 L284.6 565.2 L285.7 565.2 L286.8 565.1 L287.9 564.9 L289.0 564.7 L289.2 565.7 L289.3 566.8 L289.4 567.9 L289.2 569.3 L288.1 572.3 L287.0 575.4 L285.9 578.5 L284.8 581.8 L284.5 583.7 L284.6 585.0 L284.8 586.2 L284.9 587.4 L285.1 588.7 L285.9 588.6 L287.0 587.9 L288.1 587.2 L289.2 586.4 L290.3 585.5 L291.4 584.6 L291.5 585.6 L291.7 586.6 L291.8 587.6 L291.7 589.2 L290.7 592.9 L289.8 596.6 L288.8 600.4 L287.9 604.3 L287.7 606.3 L287.9 607.5 L288.1 608.6 L288.3 609.7 L288.5 610.8 L289.4 610.1 L290.5 608.7 L291.5 607.3 L292.6 605.8 L293.6 604.2 L294.6 602.8 L294.7 603.7 L294.9 604.6 L295.1 605.5 L295.0 607.3 L294.2 611.5 L293.4 615.8 L292.7 620.2 L291.9 624.6 L291.9 626.6 L292.1 627.5 L292.4 628.5 L292.6 629.5 L292.9 630.5 L293.7 629.0 L294.7 627.0 L295.7 624.9 L296.7 622.8 L297.6 620.6 L298.5 618.7 L298.7 619.5 L298.9 620.3 L299.1 621.0 L299.1 623.1 L298.5 627.8 L297.9 632.5 L297.3 637.3 L296.7 642.2 L296.8 643.9 L297.1 644.7 L297.4 645.5 L297.7 646.3 L298.0 647.1 L298.8 645.0 L299.7 642.4 L300.6 639.7 L301.4 637.0 L302.3 634.2 L303.0 632.0 L303.3 632.6 L303.5 633.2 L303.8 633.8 L303.8 636.1 L303.4 641.1 L303.0 646.2 L302.6 651.3 L302.3 656.4 L302.5 657.8 L302.8 658.4 L303.1 659.1 L303.4 659.7 L303.7 660.3 L304.5 657.5 L305.2 654.3 L306.0 651.1 L306.7 647.9 L307.4 644.6 L308.0 642.2 L308.3 642.6 L308.6 643.1 L308.9 643.5 L309.0 646.0 L308.8 651.2 L308.6 656.5 L308.5 661.7 L308.4 667.0 L308.6 668.0 L309.0 668.4 L309.3 668.8 L309.7 669.2 L310.0 669.6 L310.6 666.2 L311.2 662.6 L311.8 658.9 L312.4 655.3 L313.0 651.6 L313.5 649.0 L313.8 649.3 L314.0 649.5 L314.3 649.8 L314.5 652.5 L314.6 657.8 L314.6 663.0 L314.7 668.3 L314.8 673.6 L315.2 674.1 L315.5 674.3 L315.9 674.5 L316.2 674.7 L316.6 674.8 L317.0 670.8 L317.5 666.9 L317.9 662.9 L318.3 659.0 L318.7 655.0 L319.1 652.4 L319.4 652.4 L319.7 652.5 L320.0 652.5 L320.3 655.4 L320.5 660.6 L320.8 665.7 L321.2 670.9 L321.5 676.0 L321.9 676.0 L322.2 676.0 L322.6 675.9 L322.9 675.9 L323.3 675.5 L323.6 671.4" fill="none" stroke="#263a26" stroke-width="1"/>
<path d="M364.5 365.0 L364.2 365.0 L363.9 365.9 L363.7 367.4 L363.4 368.9 L363.1 370.4 L362.9 372.0 L362.6 373.5 L362.4 375.0 L362.1 376.6 L361.9 378.1 L361.7 379.7 L361.4 381.0 L361.2 381.1 L360.9 380.8 L360.6 379.4 L360.3 377.9 L360.0 376.5 L359.7 375.0 L359.4 373.6 L359.1 372.2 L358.7 370.8 L358.4 369.4 L358.1 368.1 L357.7 367.2 L357.5 367.4 L357.3 368.9 L357.0 370.5 L356.9 372.2 L356.7 373.9 L356.5 375.5 L356.3 377.2 L356.1 378.9 L356.0 380.6 L355.8 382.3 L355.6 383.9 L355.4 384.9 L355.2 385.2 L354.9 384.6 L354.5 383.3 L354.2 382.1 L353.8 380.9 L353.4 379.7 L353.0 378.5 L352.7 377.3 L352.3 376.1 L351.9 375.0 L351.5 373.8 L351.2 373.6 L350.9 374.3 L350.8 376.1 L350.7 377.8 L350.6 379.6 L350.4 381.4 L350.3 383.1 L350.2 384.9 L350.1 386.7 L350.0 388.4 L350.0 390.2 L349.9 392.0 L349.7 392.6 L349.4 393.0 L349.1 392.2 L348.7 391.2 L348.2 390.2 L347.8 389.2 L347.4 388.3 L347.0 387.4 L346.6 386.4 L346.1 385.5 L345.7 384.7 L345.2 383.8 L345.0 384.2 L344.8 385.4 L344.8 387.3 L344.7 389.1 L344.7 390.9 L344.7 392.7 L344.6 394.5 L344.6 396.4 L344.6 398.2 L344.6 399.9 L344.6 401.7 L344.5 403.4 L344.3 403.9 L344.1 404.2 L343.6 403.5 L343.2 402.7 L342.7 402.0 L342.3 401.4 L341.8 400.7 L341.4 400.0 L340.9 399.4 L340.4 398.8 L340.0 398.2 L339.6 398.0 L339.3 398.6 L339.3 400.3 L339.4 402.1 L339.4 404.0 L339.4 405.8 L339.5 407.6 L339.5 409.4 L339.6 411.2 L339.6 413.0 L339.7 414.7 L339.8 416.5 L339.7 417.8 L339.5 418.5 L339.2 418.6 L338.7 418.1 L338.3 417.7 L337.8 417.3 L337.3 416.9 L336.8 416.5 L336.4 416.2 L335.9 415.9 L335.4 415.6 L334.9 415.3 L334.6 415.6 L334.4 416.6 L334.6 418.4 L334.7 420.2 L334.8 422.0 L334.9 423.7 L335.0 425.5 L335.1 427.2 L335.3 429.0 L335.4 430.7 L335.5 432.4 L335.7 434.1 L335.6 435.1 L335.5 435.9 L335.0 435.9 L334.6 435.7 L334.1 435.6 L333.6 435.5 L333.1 435.5 L332.6 435.4 L332.1 435.4 L331.6 435.4 L331.1 435.4 L330.6 435.4 L330.5 436.3 L330.5 437.6 L330.6 439.3 L330.8 441.0 L331.0 442.6 L331.2 444.3 L331.4 445.9 L331.6 447.6 L331.8 449.2 L332.0 450.8 L332.2 452.4 L332.4 453.9 L332.3 454.8 L332.1 455.5 L331.7 455.7 L331.2 455.9 L330.7 456.1 L330.2 456.3 L329.7 456.5 L329.3 456.8 L328.8 457.1 L328.3 457.4 L327.8 457.8 L327.4 458.2 L327.3 459.2 L327.4 460.7 L327.7 462.3 L328.0 463.8 L328.2 465.3 L328.5 466.9 L328.7 468.3 L329.0 469.8 L329.3 471.3 L329.6 472.7 L329.8 474.2 L330.0 475.4 L329.9 476.3 L329.7 477.0 L329.2 477.5 L328.7 478.0 L328.3 478.5 L327.8 479.0 L327.3 479.6 L326.9 480.1 L326.4 480.7 L325.9 481.4 L325.5 482.0 L325.2 482.9 L325.2 484.0 L325.5 485.4 L325.8 486.7 L326.1 488.1 L326.4 489.4 L326.8 490.8 L327.1 492.1 L327.4 493.3 L327.8 494.6 L328.1 495.9 L328.4 497.1 L328.5 498.1 L328.5 499.1 L328.1 499.9 L327.7 500.6 L327.2 501.4 L326.8 502.2 L326.4 503.0 L325.9 503.9 L325.5 504.8 L325.1 505.7 L324.6 506.6 L324.2 507.5 L324.1 508.6 L324.3 509.7 L324.6 510.9 L325.0 512.0 L325.4 513.2 L325.8 514.3 L326.1 515.4 L326.5 516.4 L326.9 517.5 L327.3 518.5 L327.7 519.5 L328.1 520.5 L328.1 521.5 L328.0 522.5 L327.6 523.5 L327.2 524.5 L326.8 525.6 L326.4 526.6 L326.0 527.7 L325.6 528.8 L325.2 530.0 L324.8 531.1 L324.5 532.3 L324.1 533.5 L324.2 534.6 L324.5 535.6 L324.9 536.5 L325.3 537.4 L325.7 538.3 L326.1 539.1 L326.6 539.9 L327.0 540.7 L327.4 541.5 L327.8 542.3 L328.3 543.0 L328.6 543.8 L328.6 544.8 L328.5 545.9 L328.1 547.1 L327.8 548.4 L327.4 549.7 L327.1 551.0 L326.7 552.4 L326.4 553.7 L326.1 555.1 L325.7 556.5 L325.4 557.9 L325.3 559.2 L325.4 560.2 L325.8 560.9 L326.3 561.5 L326.7 562.1 L327.2 562.7 L327.6 563.3 L328.1 563.8 L328.5 564.3 L329.0 564.8 L329.4 565.3 L329.9 565.8 L330.1 566.5 L330.2 567.4 L330.0 568.8 L329.7 570.2 L329.4 571.7 L329.1 573.2 L328.8 574.7 L328.5 576.3 L328.3 577.8 L328.0 579.4 L327.7 581.0 L327.5 582.6 L327.5 583.7 L327.7 584.5 L328.2 584.9 L328.7 585.2 L329.2 585.5 L329.6 585.8 L330.1 586.1 L330.6 586.3 L331.0 586.6 L331.5 586.8 L332.0 586.9 L332.4 587.1 L332.6 587.9 L332.7 588.8 L332.4 590.4 L332.2 592.1 L332.0 593.7 L331.8 595.4 L331.6 597.1 L331.4 598.8 L331.2 600.5 L331.0 602.2 L330.8 604.0 L330.6 605.6 L330.8 606.6 L331.1 606.9 L331.6 606.9 L332.1 607.0 L332.6 607.0 L333.0 607.0 L333.5 606.9 L334.0 606.9 L334.5 606.8 L334.9 606.7 L335.4 606.6 L335.8 606.7 L335.9 607.4 L336.0 608.6 L335.8 610.3 L335.7 612.1 L335.5 613.8 L335.4 615.6 L335.3 617.4 L335.1 619.2 L335.0 621.1 L334.9 622.9 L334.8 624.7 L334.8 626.2 L335.0 626.9 L335.5 626.7 L335.9 626.4 L336.4 626.2 L336.9 625.9 L337.3 625.5 L337.8 625.2 L338.3 624.8 L338.7 624.5 L339.2 624.1 L339.6 623.6 L339.9 623.8 L340.1 624.5 L340.1 626.0 L340.0 627.8 L340.0 629.6 L339.9 631.5 L339.8 633.3 L339.8 635.2 L339.7 637.1 L339.7 638.9 L339.7 640.8 L339.6 642.7 L339.8 643.7 L340.1 644.0 L340.5 643.4 L341.0 642.9 L341.5 642.3 L341.9 641.7 L342.3 641.1 L342.8 640.4 L343.2 639.8 L343.7 639.1 L344.1 638.4 L344.5 637.7 L344.8 638.1 L345.0 638.7 L345.0 640.5 L345.0 642.4 L345.0 644.2 L345.0 646.1 L345.0 648.0 L345.1 649.8 L345.1 651.7 L345.1 653.6 L345.2 655.5 L345.2 657.3 L345.5 657.8 L345.9 657.5 L346.3 656.6 L346.7 655.8 L347.1 654.9 L347.5 654.1 L347.9 653.2 L348.4 652.2 L348.8 651.3 L349.2 650.4 L349.5 649.4 L349.9 648.7 L350.1 649.1 L350.3 650.0 L350.4 651.8 L350.5 653.6 L350.6 655.4 L350.7 657.3 L350.8 659.1 L350.9 660.9 L351.0 662.8 L351.1 664.6 L351.3 666.4 L351.4 667.7 L351.7 668.1 L352.1 667.0 L352.5 666.0 L352.9 664.8 L353.2 663.7 L353.6 662.6 L354.0 661.4 L354.3 660.3 L354.7 659.1 L355.0 657.9 L355.4 656.7 L355.7 656.3 L355.9 656.5 L356.1 657.7 L356.3 659.5 L356.4 661.2 L356.6 662.9 L356.8 664.7 L357.0 666.4 L357.2 668.2 L357.4 669.9 L357.6 671.6 L357.8 673.3 L358.0 674.0 L358.3 673.8 L358.7 672.5 L359.0 671.1 L359.3 669.8 L359.6 668.5 L359.9 667.1 L360.3 665.7 L360.6 664.4 L360.9 663.0 L361.2 661.6 L361.4 660.2 L361.7 660.0 L362.0 660.1 L362.2 661.7 L362.4 663.3 L362.7 664.9 L362.9 666.5 L363.2 668.1 L363.4 669.7 L363.7 671.3 L363.9 672.9 L364.2 674.4 L364.5 676.0 L364.8 676.0 L365.1 675.1 L365.3 673.6 L365.6 672.1 L365.9 670.6 L366.1 669.0 L366.4 667.5 L366.6 666.0 L366.9 664.4 L367.1 662.9 L367.3 661.3 L367.6 660.0 L367.8 659.9 L368.1 660.2 L368.4 661.6 L368.7 663.1 L369.0 664.5 L369.3 666.0 L369.6 667.4 L369.9 668.8 L370.3 670.2 L370.6 671.6 L370.9 672.9 L371.3 673.8 L371.5 673.6 L371.7 672.1 L372.0 670.5 L372.1 668.8 L372.3 667.1 L372.5 665.5 L372.7 663.8 L372.9 662.1 L373.0 660.4 L373.2 658.7 L373.4 657.1 L373.6 656.1 L373.8 655.8 L374.1 656.4 L374.5 657.7 L374.8 658.9 L375.2 660.1 L375.6 661.3 L376.0 662.5 L376.3 663.7 L376.7 664.9 L377.1 666.0 L377.5 667.2 L377.8 667.4 L378.1 666.7 L378.2 664.9 L378.3 663.2 L378.4 661.4 L378.6 659.6 L378.7 657.9 L378.8 656.1 L378.9 654.3 L379.0 652.6 L379.0 650.8 L379.1 649.0 L379.3 648.4 L379.6 648.0 L379.9 648.8 L380.3 649.8 L380.8 650.8 L381.2 651.8 L381.6 652.7 L382.0 653.6 L382.4 654.6 L382.9 655.5 L383.3 656.3 L383.8 657.2 L384.0 656.8 L384.2 655.6 L384.2 653.7 L384.3 651.9 L384.3 650.1 L384.3 648.3 L384.4 646.5 L384.4 644.6 L384.4 642.8 L384.4 641.1 L384.4 639.3 L384.5 637.6 L384.7 637.1 L384.9 636.8 L385.4 637.5 L385.8 638.3 L386.3 639.0 L386.7 639.6 L387.2 640.3 L387.6 641.0 L388.1 641.6 L388.6 642.2 L389.0 642.8 L389.4 643.0 L389.7 642.4 L389.7 640.7 L389.6 638.9 L389.6 637.0 L389.6 635.2 L389.5 633.4 L389.5 631.6 L389.4 629.8 L389.4 628.0 L389.3 626.3 L389.2 624.5 L389.3 623.2 L389.5 622.5 L389.8 622.4 L390.3 622.9 L390.7 623.3 L391.2 623.7 L391.7 624.1 L392.2 624.5 L392.6 624.8 L393.1 625.1 L393.6 625.4 L394.1 625.7 L394.4 625.4 L394.6 624.4 L394.4 622.6 L394.3 620.8 L394.2 619.0 L394.1 617.3 L394.0 615.5 L393.9 613.8 L393.7 612.0 L393.6 610.3 L393.5 608.6 L393.3 606.9 L393.4 605.9 L393.5 605.1 L394.0 605.1 L394.4 605.3 L394.9 605.4 L395.4 605.5 L395.9 605.5 L396.4 605.6 L396.9 605.6 L397.4 605.6 L397.9 605.6 L398.4 605.6 L398.5 604.7 L398.5 603.4 L398.4 601.7 L398.2 600.0 L398.0 598.4 L397.8 596.7 L397.6 595.1 L397.4 593.4 L397.2 591.8 L397.0 590.2 L396.8 588.6 L396.6 587.1 L396.7 586.2 L396.9 585.5 L397.3 585.3 L397.8 585.1 L398.3 584.9 L398.8 584.7 L399.3 584.5 L399.7 584.2 L400.2 583.9 L400.7 583.6 L401.2 583.2 L401.6 582.8 L401.7 581.8 L401.6 580.3 L401.3 578.7 L401.0 577.2 L400.8 575.7 L400.5 574.1 L400.3 572.7 L400.0 571.2 L399.7 569.7 L399.4 568.3 L399.2 566.8 L399.0 565.6 L399.1 564.7 L399.3 564.0 L399.8 563.5 L400.3 563.0 L400.7 562.5 L401.2 562.0 L401.7 561.4 L402.1 560.9 L402.6 560.3 L403.1 559.6 L403.5 559.0 L403.8 558.1 L403.8 557.0 L403.5 555.6 L403.2 554.3 L402.9 552.9 L402.6 551.6 L402.2 550.2 L401.9 548.9 L401.6 547.7 L401.2 546.4 L400.9 545.1 L400.6 543.9 L400.5 542.9 L400.5 541.9 L400.9 541.1 L401.3 540.4 L401.8 539.6 L402.2 538.8 L402.6 538.0 L403.1 537.1 L403.5 536.2 L403.9 535.3 L404.4 534.4 L404.8 533.5 L404.9 532.4 L404.7 531.3 L404.4 530.1 L404.0 529.0 L403.6 527.8 L403.2 526.7 L402.9 525.6 L402.5 524.6 L402.1 523.5 L401.7 522.5 L401.3 521.5 L400.9 520.5 L400.9 519.5 L401.0 518.5 L401.4 517.5 L401.8 516.5 L402.2 515.4 L402.6 514.4 L403.0 513.3 L403.4 512.2 L403.8 511.0 L404.2 509.9 L404.5 508.7 L404.9 507.5 L404.8 506.4 L404.5 505.4 L404.1 504.5 L403.7 503.6 L403.3 502.7 L402.9 501.9 L402.4 501.1 L402.0 500.3 L401.6 499.5 L401.2 498.7 L400.7 498.0 L400.4 497.2 L400.4 496.2 L400.5 495.1 L400.9 493.9 L401.2 492.6 L401.6 491.3 L401.9 490.0 L402.3 488.6 L402.6 487.3 L402.9 485.9 L403.3 484.5 L403.6 483.1 L403.7 481.8 L403.6 480.8 L403.2 480.1 L402.7 479.5 L402.3 478.9 L401.8 478.3 L401.4 477.7 L400.9 477.2 L400.5 476.7 L400.0 476.2 L399.6 475.7 L399.1 475.2 L398.9 474.5 L398.8 473.6 L399.0 472.2 L399.3 470.8 L399.6 469.3 L399.9 467.8 L400.2 466.3 L400.5 464.7 L400.7 463.2 L401.0 461.6 L401.3 460.0 L401.5 458.4 L401.5 457.3 L401.3 456.5 L400.8 456.1 L400.3 455.8 L399.8 455.5 L399.4 455.2 L398.9 454.9 L398.4 454.7 L398.0 454.4 L397.5 454.2 L397.0 454.1 L396.6 453.9 L396.4 453.1 L396.3 452.2 L396.6 450.6 L396.8 448.9 L397.0 447.3 L397.2 445.6 L397.4 443.9 L397.6 442.2 L397.8 440.5 L398.0 438.8 L398.2 437.0 L398.4 435.4 L398.2 434.4 L397.9 434.1 L397.4 434.1 L396.9 434.0 L396.4 434.0 L396.0 434.0 L395.5 434.1 L395.0 434.1 L394.5 434.2 L394.1 434.3 L393.6 434.4 L393.2 434.3 L393.1 433.6 L393.0 432.4 L393.2 430.7 L393.3 428.9 L393.5 427.2 L393.6 425.4 L393.7 423.6 L393.9 421.8 L394.0 419.9 L394.1 418.1 L394.2 416.3 L394.2 414.8 L394.0 414.1 L393.5 414.3 L393.1 414.6 L392.6 414.8 L392.1 415.1 L391.7 415.5 L391.2 415.8 L390.7 416.2 L390.3 416.5 L389.8 416.9 L389.4 417.4 L389.1 417.2 L388.9 416.5 L388.9 415.0 L389.0 413.2 L389.0 411.4 L389.1 409.5 L389.2 407.7 L389.2 405.8 L389.3 403.9 L389.3 402.1 L389.3 400.2 L389.4 398.3 L389.2 397.3 L388.9 397.0 L388.5 397.6 L388.0 398.1 L387.5 398.7 L387.1 399.3 L386.7 399.9 L386.2 400.6 L385.8 401.2 L385.3 401.9 L384.9 402.6 L384.5 403.3 L384.2 402.9 L384.0 402.3 L384.0 400.5 L384.0 398.6 L384.0 396.8 L384.0 394.9 L384.0 393.0 L383.9 391.2 L383.9 389.3 L383.9 387.4 L383.8 385.5 L383.8 383.7 L383.5 383.2 L383.1 383.5 L382.7 384.4 L382.3 385.2 L381.9 386.1 L381.5 386.9 L381.1 387.8 L380.6 388.8 L380.2 389.7 L379.8 390.6 L379.5 391.6 L379.1 392.3 L378.9 391.9 L378.7 391.0 L378.6 389.2 L378.5 387.4 L378.4 385.6 L378.3 383.7 L378.2 381.9 L378.1 380.1 L378.0 378.2 L377.9 376.4 L377.7 374.6 L377.6 373.3 L377.3 372.9 L376.9 374.0 L376.5 375.0 L376.1 376.2 L375.8 377.3 L375.4 378.4 L375.0 379.6 L374.7 380.7 L374.3 381.9 L374.0 383.1 L373.6 384.3 L373.3 384.7 L373.1 384.5 L372.9 383.3 L372.7 381.5 L372.6 379.8 L372.4 378.1 L372.2 376.3 L372.0 374.6 L371.8 372.8 L371.6 371.1 L371.4 369.4 L371.2 367.7 L371.0 367.0 L370.7 367.2 L370.3 368.5 L370.0 369.9 L369.7 371.2 L369.4 372.5 L369.1 373.9 L368.7 375.3 L368.4 376.6 L368.1 378.0 L367.8 379.4 L367.6 380.8 L367.3 381.0 L367.0 380.9 L366.8 379.3 L366.6 377.7 L366.3 376.1 L366.1 374.5 L365.8 372.9 L365.6 371.3 L365.3 369.7 L365.1 368.1 L364.8 366.6 L364.5 365.0z" fill="#129612" stroke="#1d3a1d" stroke-width="1"/>
<ellipse cx="366" cy="520.5" rx="32" ry="118" fill="url(#web)" stroke="#244024" stroke-width="1"/>
<ellipse cx="368" cy="520.5" rx="27" ry="111" fill="none" stroke="#2a4a2a" stroke-width="0.8" opacity="0.8"/>
<ellipse cx="348.5" cy="433" rx="5.2" ry="14" fill="#0a6a0a" stroke="#244024" stroke-width="0.9"/>
<ellipse cx="349.8" cy="435" rx="2.5" ry="10" fill="#2bcb2b" opacity="0.85"/>
<ellipse cx="365" cy="451" rx="5.2" ry="14" fill="#0a6a0a" stroke="#244024" stroke-width="0.9"/>
<ellipse cx="366.3" cy="453" rx="2.5" ry="10" fill="#2bcb2b" opacity="0.85"/>
<ellipse cx="344.5" cy="602" rx="5.2" ry="15" fill="#0a6a0a" stroke="#244024" stroke-width="0.9"/>
<ellipse cx="345.8" cy="604" rx="2.5" ry="11" fill="#2bcb2b" opacity="0.85"/>
<ellipse cx="361.5" cy="600" rx="5.2" ry="16" fill="#0a6a0a" stroke="#244024" stroke-width="0.9"/>
<ellipse cx="362.8" cy="602" rx="2.5" ry="12" fill="#2bcb2b" opacity="0.85"/>
<ellipse cx="335" cy="466" rx="5.2" ry="11" fill="#0a6a0a" stroke="#244024" stroke-width="0.9"/>
<ellipse cx="336.3" cy="468" rx="2.5" ry="7" fill="#2bcb2b" opacity="0.85"/>
<path d="M341 462 C349 466 350 468 356 469 L426 469 L426 572 L356 572 C350 573 349 575 341 579 Q331 520 341 462z" fill="url(#cyl)"/>
<path d="M342 463 C349 466 350 468 354 470 Q342 520 354 571 C350 573 349 575 342 578" fill="none" stroke="#3ede3e" stroke-width="1.8" opacity="0.6"/>
<path d="M350 470 Q338 520 350 571 L362 571 Q350 520 362 470z" fill="#0a6e0a" opacity="0.35"/>
<rect x="404" y="469" width="22" height="103" fill="#064806" opacity="0.25"/>
<ellipse cx="431" cy="520" rx="14" ry="60" fill="url(#cyl)" stroke="#2a3a2a" stroke-width="0.8"/>
<ellipse cx="433" cy="520" rx="12" ry="58" fill="#84c484" stroke="#3a5a3a" stroke-width="0.6"/>
<path d="M437 468.5 L501 468.5 L501 570.5 L437 570.5 A10 51 0 0 1 437 468.5z" fill="url(#cyl2)"/>
<path d="M437 468.5 A10 51 0 0 0 437 570.5" fill="none" stroke="#2a3a2a" stroke-width="1"/>
<path d="M478 468.5 A9 51 0 0 1 478 570.5" fill="none" stroke="#40dd40" stroke-width="1" opacity="0.45"/>
<path d="M488 468.5 A9 51 0 0 1 488 570.5" fill="none" stroke="#0a5a0a" stroke-width="1" opacity="0.5"/>
<path d="M496 476.3 L560 477 L560 559.4 L496 561z" fill="url(#cyl2)"/>
<path d="M501 468.5 A9 51 0 0 1 501 570.5" fill="none" stroke="#0b5a0b" stroke-width="1.2" opacity="0.7"/>
<path d="M527 476.5 A8 42 0 0 1 527 560" fill="none" stroke="#40dd40" stroke-width="1" opacity="0.4"/>
<path d="M536 476.5 A8 42 0 0 1 536 560" fill="none" stroke="#0a5a0a" stroke-width="1" opacity="0.4"/>
<ellipse cx="560" cy="518.2" rx="11.5" ry="41.3" fill="url(#endin)" stroke="#1a3a1a" stroke-width="1"/>
<ellipse cx="558.5" cy="517" rx="8" ry="37" fill="#065a06"/>
<path d="M562 482 A9 38 0 0 1 562 555" fill="none" stroke="#3ae03a" stroke-width="3" opacity="0.9"/>
  </g>
  <g id="dims">
<text x="34.6" y="523.5" transform="rotate(-90 34.6 523.5)" fill="#0c8c0c" font-size="13" font-family="Liberation Sans" font-weight="bold" text-anchor="middle" dominant-baseline="central" letter-spacing="1.0">Ø  104,2</text>
<text x="78.4" y="523.0" transform="rotate(-90 78.4 523.0)" fill="#0c8c0c" font-size="12.5" font-family="Liberation Sans" font-weight="bold" text-anchor="middle" dominant-baseline="central" letter-spacing="1.0">Ø  50</text>
<text x="115.0" y="550.0" transform="rotate(-90 115.0 550.0)" fill="#0c8c0c" font-size="12.5" font-family="Liberation Sans" font-weight="bold" text-anchor="middle" dominant-baseline="central" letter-spacing="1.0">Ø  40</text>
<text x="109.0" y="515.5" transform="rotate(-90 109.0 515.5)" fill="#0c8c0c" font-size="11.5" font-family="Liberation Sans" font-weight="bold" text-anchor="middle" dominant-baseline="central" letter-spacing="1.0">+0</text>
<text x="125.0" y="501.5" transform="rotate(-90 125.0 501.5)" fill="#0c8c0c" font-size="11.5" font-family="Liberation Sans" font-weight="bold" text-anchor="middle" dominant-baseline="central" letter-spacing="1.5">-0,025</text>
<text x="182.0" y="521.5" transform="rotate(-90 182.0 521.5)" fill="#0c8c0c" font-size="12.5" font-family="Liberation Sans" font-weight="bold" text-anchor="middle" dominant-baseline="central" letter-spacing="1.0">Ø  33</text>
<text x="384.5" y="726.5" fill="#0c8c0c" font-size="12.5" font-family="Liberation Sans" font-weight="bold" text-anchor="middle" dominant-baseline="central" letter-spacing="1.0">136,8</text>
<text x="429.0" y="718.5" fill="#0c8c0c" font-size="11.5" font-family="Liberation Sans" font-weight="bold" text-anchor="middle" dominant-baseline="central" letter-spacing="1.2">+0,03</text>
<text x="420.0" y="733.0" fill="#0c8c0c" font-size="11.5" font-family="Liberation Sans" font-weight="bold" text-anchor="middle" dominant-baseline="central" letter-spacing="1.0">0</text>
<text x="474.0" y="683.5" fill="#0c8c0c" font-size="12.5" font-family="Liberation Sans" font-weight="bold" text-anchor="middle" dominant-baseline="central" letter-spacing="1.0">55</text>
<text x="507.0" y="676.0" fill="#0c8c0c" font-size="11.5" font-family="Liberation Sans" font-weight="bold" text-anchor="middle" dominant-baseline="central" letter-spacing="1.2">+0,01</text>
<text x="507.5" y="690.5" fill="#0c8c0c" font-size="11.5" font-family="Liberation Sans" font-weight="bold" text-anchor="middle" dominant-baseline="central" letter-spacing="1.2">-0,02</text>
<line x1="298.8" y1="581.6" x2="296.6" y2="705.9" stroke="#f5a04a" stroke-width="2"/>
<line x1="438.5" y1="584.2" x2="435.7" y2="704.4" stroke="#f5a04a" stroke-width="2"/>
<line x1="296.6" y1="699.4" x2="435.6" y2="697.9" stroke="#f5a04a" stroke-width="2"/>
<text x="334.5" y="685.5" fill="#f5a04a" font-size="12.5" font-family="Liberation Sans" font-weight="bold" text-anchor="middle" dominant-baseline="central" letter-spacing="1.0">63,8</text>
<text x="376.0" y="677.5" fill="#f5a04a" font-size="11.5" font-family="Liberation Sans" font-weight="bold" text-anchor="middle" dominant-baseline="central" letter-spacing="1.2">+0,02</text>
<text x="376.0" y="691.5" fill="#f5a04a" font-size="11.5" font-family="Liberation Sans" font-weight="bold" text-anchor="middle" dominant-baseline="central" letter-spacing="1.2">-0,03</text>
<text x="519.4" y="615.5" fill="#0c8c0c" font-size="11" font-family="Liberation Sans" font-weight="bold" text-anchor="middle" dominant-baseline="central" letter-spacing="1.0">13,7</text>
<text x="482.5" y="320.5" fill="#0c8c0c" font-size="12.5" font-family="Liberation Sans" font-weight="bold" text-anchor="middle" dominant-baseline="central" letter-spacing="1.0">28,4</text>
<text x="747.7" y="514.4" transform="rotate(-90 747.7 514.4)" fill="#0c8c0c" font-size="12.5" font-family="Liberation Sans" font-weight="bold" text-anchor="middle" dominant-baseline="central" letter-spacing="1.0">Ø  53</text>
<line x1="497.0" y1="468.8" x2="709.7" y2="465.6" stroke="#e05252" stroke-width="2.2"/>
<line x1="497.0" y1="570.8" x2="707.9" y2="568.0" stroke="#e05252" stroke-width="2.2"/>
<line x1="703.6" y1="465.6" x2="701.5" y2="568.5" stroke="#e05252" stroke-width="2.2"/>
<text x="688.0" y="542.0" transform="rotate(-90 688.0 542.0)" fill="#e05252" font-size="12.5" font-family="Liberation Sans" font-weight="bold" text-anchor="middle" dominant-baseline="central" letter-spacing="1.0">Ø  45</text>
<text x="682.0" y="510.0" transform="rotate(-90 682.0 510.0)" fill="#e05252" font-size="11.5" font-family="Liberation Sans" font-weight="bold" text-anchor="middle" dominant-baseline="central" letter-spacing="1.0">+0</text>
<text x="696.7" y="493.5" transform="rotate(-90 696.7 493.5)" fill="#e05252" font-size="11.5" font-family="Liberation Sans" font-weight="bold" text-anchor="middle" dominant-baseline="central" letter-spacing="1.5">-0,025</text>
<text x="660.3" y="515.0" transform="rotate(-90 660.3 515.0)" fill="#0c8c0c" font-size="12.5" font-family="Liberation Sans" font-weight="bold" text-anchor="middle" dominant-baseline="central" letter-spacing="1.0">Ø  38</text>
<text x="623.1" y="515.0" transform="rotate(-90 623.1 515.0)" fill="#0c8c0c" font-size="12.5" font-family="Liberation Sans" font-weight="bold" text-anchor="middle" dominant-baseline="central" letter-spacing="1.0">Ø  37</text>
<text x="595.5" y="515.0" transform="rotate(-90 595.5 515.0)" fill="#0c8c0c" font-size="12.5" font-family="Liberation Sans" font-weight="bold" text-anchor="middle" dominant-baseline="central" letter-spacing="1.0">Ø  33</text>
<line x1="425.0" y1="513.5" x2="555.0" y2="513.5" stroke="#1a2a1a" stroke-width="1.2"/>
<line x1="459.0" y1="525.6" x2="572.0" y2="525.6" stroke="#d8d8d8" stroke-width="1"/>
<line x1="408.0" y1="469.0" x2="408.0" y2="571.0" stroke="#d8d8d8" stroke-width="1.0"/>
<path d="M408.0 469.5 L410.0 474.5 L406.0 474.5z" fill="#d8d8d8"/>
<path d="M408.0 571.0 L406.0 566.0 L410.0 566.0z" fill="#d8d8d8"/>
<text x="399.6" y="421.0" transform="rotate(-90 399.6 421.0)" fill="#0c8c0c" font-size="11" font-family="Liberation Sans" font-weight="bold" text-anchor="middle" dominant-baseline="central" letter-spacing="1.0">Ø  45</text>
<line x1="335.0" y1="589.0" x2="402.0" y2="589.0" stroke="#1a2a1a" stroke-width="1.0"/>
<line x1="335.0" y1="621.6" x2="402.0" y2="621.6" stroke="#1a2a1a" stroke-width="1.0"/>
<line x1="335.0" y1="589.0" x2="345.0" y2="589.0" stroke="#d8d8d8" stroke-width="1.0"/>
<line x1="335.0" y1="621.6" x2="345.0" y2="621.6" stroke="#d8d8d8" stroke-width="1.0"/>
<line x1="296.0" y1="404.5" x2="326.0" y2="404.3" stroke="#d8d8d8" stroke-width="1.0"/>
<line x1="300.0" y1="640.4" x2="318.0" y2="640.4" stroke="#d8d8d8" stroke-width="1.0"/>
<line x1="290.0" y1="466.0" x2="300.0" y2="466.0" stroke="#d8d8d8" stroke-width="1.0"/>
<line x1="262.0" y1="484.5" x2="264.0" y2="484.5" stroke="#d8d8d8" stroke-width="1.0"/>
<line x1="262.0" y1="489.0" x2="258.5" y2="600.0" stroke="#d8d8d8" stroke-width="1.0"/>
<line x1="454.9" y1="525.6" x2="454.9" y2="547.3" stroke="#d8d8d8" stroke-width="1.0"/>
<text x="460.5" y="555.0" fill="#e6e6e6" font-size="10" font-family="Liberation Sans" font-weight="bold" text-anchor="middle" dominant-baseline="central" letter-spacing="0">Ra 1.60</text>
<path d="M467 560.2 L473.9 570.6 L486 549 M467 560.2 H479" fill="none" stroke="#e6e6e6" stroke-width="1"/>
<text x="266.0" y="554.0" fill="#e0e0e0" font-size="10" font-family="Liberation Sans" font-weight="bold" text-anchor="middle" dominant-baseline="central" letter-spacing="0">Ra 1.60</text>
<path d="M264 558 L272 568 L284 548 M264 558 H277" fill="none" stroke="#e0e0e0" stroke-width="1"/>
<path d="M0 917 L9 921 L0 925z" fill="#2020f0"/><text x="13" y="925" fill="#2020f0" font-size="9" font-family="Liberation Sans">Z</text>
  </g>
  </svg>
  <div class="a" style="left:0;top:249px;width:825px;height:2px;background:#f0a050"></div>
  <div class="a" style="left:824px;top:249px;width:1px;height:676px;background:#f0a050"></div>
  <div class="a" style="left:825px;top:36px;width:1px;height:889px;background:#eef0f3"></div>
</div>

<!-- ================= KM WINDOW ================= -->
<div class="a" style="left:826px;top:0;width:2px;height:925px;background:#eeeff1"></div>
<div class="a" style="left:828px;top:0;width:2px;height:925px;background:#8c8c8c"></div>
<div class="a" style="left:830px;top:0;width:794px;height:44px;background:#fff"></div>
<svg style="left:830px;top:0" width="794" height="44">
  <defs>
    <linearGradient id="kmg" x1="0" y1="0" x2="0" y2="1"><stop offset="0" stop-color="#bfe4f6"/><stop offset="0.45" stop-color="#1a9ad6"/><stop offset="1" stop-color="#47c6ee"/></linearGradient>
    <linearGradient id="fold" x1="0" y1="0" x2="0" y2="1"><stop offset="0" stop-color="#ffe9a8"/><stop offset="1" stop-color="#e8a923"/></linearGradient>
    <linearGradient id="flop" x1="0" y1="0" x2="0" y2="1"><stop offset="0" stop-color="#8e8ee6"/><stop offset="1" stop-color="#4c4cb8"/></linearGradient>
  </defs>
  <rect x="2" y="9" width="24" height="24" rx="4" fill="url(#kmg)"/>
  <text x="14" y="25" font-size="10.5" font-weight="bold" fill="#fff" text-anchor="middle" font-family="Liberation Sans">KM</text>
  <line x1="32.5" y1="10" x2="32.5" y2="41" stroke="#a0a0a0"/>
  <line x1="150.5" y1="10" x2="150.5" y2="41" stroke="#a0a0a0"/>
  <path d="M42 15 h10 l5 5 v15 h-15z" fill="#f4f6fa" stroke="#556" stroke-width="1"/>
  <path d="M52 30 h8 M56 26 v8" stroke="#2a7fc0" stroke-width="2.6"/>
  <path d="M67 20 h7 l2 2 h10 v12 h-19z" fill="#e9c25b"/><path d="M67 34 l4-9 h16 l-4 9z" fill="url(#fold)" stroke="#b58a2a" stroke-width="0.6"/>
  <path d="M80 18 q4-5 9-1" fill="none" stroke="#3a6ab0" stroke-width="1.3"/>
  <rect x="98" y="14" width="22" height="22" rx="1.5" fill="url(#flop)" stroke="#3a3a9a" stroke-width="0.8"/>
  <rect x="102" y="15" width="13" height="9" fill="#f2f2f8"/><rect x="104" y="28" width="9" height="7" fill="#2a2a4a"/><rect x="106" y="30" width="3" height="3" fill="#ddd"/>
  <rect x="778" y="19" width="16" height="1.3" fill="#999"/>
</svg>
<div class="t" style="left:987px;top:14px;font-size:18px;color:#111" id="kmtitle">齿轮轴_jt.kmmpd - 开目三维机加工艺规划系统</div>

<!-- tab row -->
<div class="a" style="left:830px;top:44px;width:794px;height:38px;background:#dee7f3"></div>
<div class="a" style="left:830px;top:44px;width:45px;height:38px;background:linear-gradient(#a9c5ea,#86a9dc 45%,#6a97d8 60%,#8fc0ef)"></div>
<svg style="left:830px;top:44px" width="45" height="38">
  <rect x="5" y="11" width="14" height="14" fill="url(#kmg)"/><text x="12" y="21" font-size="6" font-weight="bold" fill="#fff" text-anchor="middle" font-family="Liberation Sans">KM</text>
  <path d="M26 16 h12 l-6 6z" fill="#111"/>
</svg>
<div class="a" style="left:902px;top:46px;width:65px;height:37px;background:linear-gradient(#fdfeff,#f2f6fb);border:1px solid #b9c9dd;border-bottom:none;border-radius:3px 3px 0 0"></div>
<div id="kmtabs">
<div class="t" style="left:914px;top:54px;font-size:20px;color:#111">开始</div>
<div class="t" style="left:985px;top:54px;font-size:20px;color:#111">复杂特征</div>
<div class="t" style="left:1097px;top:54px;font-size:20px;color:#111">工艺特征</div>
<div class="t" style="left:1209px;top:54px;font-size:20px;color:#111">工艺设计</div>
<div class="t" style="left:1321px;top:54px;font-size:20px;color:#111">工艺复用</div>
<div class="t" style="left:1433px;top:54px;font-size:20px;color:#111">工艺验证</div>
<div class="t" style="left:1544px;top:54px;font-size:20px;color:#111">工具</div>
</div>

<!-- ribbon body -->
<div class="a" style="left:830px;top:82px;width:794px;height:140px;background:linear-gradient(#f4f7fc 0%,#e2eaf6 30%,#dbe5f3 100%);border-top:1px solid #c8d5e6"></div>
<div class="a" style="left:830px;top:220px;width:794px;height:1px;background:#eef3f9"></div>
<div class="a" style="left:830px;top:221px;width:794px;height:2px;background:#a3b3c8"></div>
<div class="a" style="left:830px;top:223px;width:794px;height:702px;background:#dbe4ef"></div>
<svg style="left:830px;top:82px" width="794" height="140">
  <g stroke="#b7c6d9" stroke-width="1"><line x1="128.5" y1="6" x2="128.5" y2="134"/><line x1="221.5" y1="6" x2="221.5" y2="134"/><line x1="439.5" y1="6" x2="439.5" y2="134"/><line x1="693.5" y1="6" x2="693.5" y2="134"/></g>
  <g stroke="#fafcfe" stroke-width="1"><line x1="129.5" y1="6" x2="129.5" y2="134"/><line x1="222.5" y1="6" x2="222.5" y2="134"/><line x1="440.5" y1="6" x2="440.5" y2="134"/><line x1="694.5" y1="6" x2="694.5" y2="134"/></g>
  <!-- new doc -->
  <path d="M33 10 h19 l9 9 v33 h-28z" fill="#f6f8fb" stroke="#8f98a3" stroke-width="1.3"/>
  <path d="M52 10 v9 h9z" fill="#dfe6f0" stroke="#8f98a3" stroke-width="1.2"/>
  <path d="M62.5 34 v22 M51.5 45 h22" stroke="#1f4f6e" stroke-width="8"/>
  <path d="M62.5 35.5 v19 M53 45 h19" stroke="#4aa3d6" stroke-width="5"/>
  <!-- small open/save/globe -->
  <path d="M98 12 h6 l2 2 h11 v14 h-19z" fill="#e9c25b"/><path d="M96 29 l5-11 h19 l-5 11z" fill="url(#fold)" stroke="#b58a2a" stroke-width="0.6"/>
  <path d="M109 12 q5-5 10-1 l-1 3" fill="none" stroke="#3a6ab0" stroke-width="1.4"/>
  <rect x="98" y="38" width="21" height="21" rx="1.5" fill="url(#flop)" stroke="#3a3a9a" stroke-width="0.8"/>
  <rect x="102" y="39" width="13" height="8" fill="#f2f2f8"/><rect x="103" y="51" width="10" height="7" fill="#2a2a4a"/><rect x="106" y="53" width="3" height="3" fill="#ccc"/>
  <circle cx="109" cy="80" r="10.5" fill="#3a9de8"/><path d="M98.5 80 a10.5 10.5 0 0 0 21 0" fill="#1c5fb8"/><circle cx="106" cy="76" r="4" fill="#8fd0f8" opacity="0.7"/><path d="M99 89 q14 3 21-14" fill="none" stroke="#e8b030" stroke-width="2"/><path d="M100 67 l9 0 -1 11z" fill="#e02020"/>
  <!-- auto recognize -->
  <g id="stepicon">
    <path d="M159.3 33.3 H172 V18.8 H187.5 V46.4 H159.3z" fill="#ee7134"/>
    <path d="M162.8 10.4 H175.9 L187.5 18.8 H172z" fill="#eeeeee"/>
    <path d="M162.8 10.4 L172 18.8 V33.3 L162.8 21.7z" fill="#d4d4d4"/>
    <path d="M153.9 21.7 H162.8 L172 33.3 H159.3z" fill="#f4f4f4"/>
    <path d="M153.9 21.7 L159.3 33.3 V46.4 L153.9 33.9z" fill="#dcdcdc"/>
    <path d="M153.9 21.7 H162.8 V10.4 H175.9 L187.5 18.8 V46.4 H159.3 L153.9 33.9z" fill="none" stroke="#2a2a2a" stroke-width="1.3" stroke-linejoin="round"/>
    <path d="M159.3 46.4 V33.3 H172 V18.8 H187.5" fill="none" stroke="#b83a18" stroke-width="1"/>
  </g>
  <path d="M183 34.5 L197.3 46.7 L188.4 45.8 L183 54.1z" fill="#3a95cf" stroke="#1e2e3e" stroke-width="1.2" stroke-linejoin="round"/>
  <use href="#stepicon" x="94" y="0"/>
  <path d="M274 53 l-6-7 q-2-3 1-4 q2-1 4 1 l3 3 v-14 q0-3 3-3 t3 3 v8 q3-2 5 0 q3-1 4 2 q3-1 4 2 v9 q0 6-5 9 h-10z" fill="#3b9fd8" stroke="#1a4a70" stroke-width="1.1"/>
  <!-- small feature icons -->
  <path d="M318 24 l9-16 11 5 -9 16z" fill="#d52020" stroke="#8a1010" stroke-width="0.8"/>
  <g fill="#111"><path d="M345 16 h9 l-4.5 4.5z M345 46 h9 l-4.5 4.5z M391.5 46 h9 l-4.5 4.5z M391.5 76 h9 l-4.5 4.5z"/></g>
  <rect x="361" y="12" width="2" height="15" fill="#d42020"/><rect x="365" y="15" width="9" height="11" fill="#c81818"/><rect x="377" y="15" width="8" height="11" fill="#d02020"/>
  <path d="M315 41 l10-4 14 3 v15 l-10 4 -14-3z" fill="#9a9a9a" stroke="#444" stroke-width="0.9"/><path d="M315 41 l14 3 10-4 M329 44 v15" fill="none" stroke="#444" stroke-width="0.9"/><path d="M315.5 41.5 v14 l13.5 3 v-14z" fill="#e6e6e6"/><circle cx="322" cy="51" r="3.8" fill="#e01010"/>
  <path d="M361 46 l12-6 12 4 v11 l-12 5 -12-4z" fill="#8a8a8a" stroke="#333" stroke-width="0.9"/><path d="M361 46 l12 4 12-6 M373 50 v10" fill="none" stroke="#c22" stroke-width="1.4"/>
  <path d="M316 71 l9-3 14 3 v17 l-9 3 -14-3z" fill="#c01010"/><path d="M316 71 l14 3 9-3 -14-3z" fill="#f03a3a"/><path d="M316 71 v17 l14 3 v-17z" fill="#7a0808"/>
  <rect x="362" y="69" width="22" height="21" fill="#8a8a8a" stroke="#3a1a1a" stroke-width="2.2"/>
  <path d="M412 11 q0-3 7.5-3 t7.5 3 v16 q0 3-7.5 3 t-7.5-3z" fill="#c81818"/><ellipse cx="419.5" cy="10.5" rx="7" ry="2.8" fill="#555"/>
  <rect x="407" y="41" width="9" height="14" rx="1" fill="#9a9a9a"/><rect x="421" y="41" width="9" height="14" rx="1" fill="#9a9a9a"/><rect x="416" y="43" width="5" height="10" fill="#d01818"/>
  <!-- PMI button -->
  <rect x="445.5" y="4.5" width="56" height="102" rx="2" fill="url(#pmig)" stroke="#e8b048"/>
  <defs><linearGradient id="pmig" x1="0" y1="0" x2="0" y2="1"><stop offset="0" stop-color="#fbd2a8"/><stop offset="0.38" stop-color="#f7b266"/><stop offset="0.4" stop-color="#f9a445"/><stop offset="1" stop-color="#fde9a6"/></linearGradient></defs>
  <path d="M469 41 h28 v-24" fill="none" stroke="#9a9a9a" stroke-width="3"/>
  <rect x="466" y="14.5" width="28" height="23" fill="none" stroke="#222" stroke-width="3"/>
  <path d="M466 26 h-6 v20" fill="none" stroke="#222" stroke-width="2.6"/>
  <path d="M453 43 h14.6 l-7.3 10z" fill="#111"/>
  <ellipse cx="488" cy="33" rx="9" ry="10" fill="#f7d320"/><ellipse cx="485" cy="29" rx="4" ry="4" fill="#fff6b0"/><rect x="485" y="43" width="7" height="9" fill="#aaa"/>
  <!-- checkboxes -->
  <g fill="#fff" stroke="#333" stroke-width="1"><rect x="506.5" y="10.5" width="19" height="19"/><rect x="506.5" y="43.5" width="19" height="19"/><rect x="506.5" y="76.5" width="19" height="19"/><rect x="579.5" y="10.5" width="19" height="19"/><rect x="579.5" y="43.5" width="19" height="19"/></g>
  <g fill="none" stroke="#333" stroke-width="1.4"><path d="M510 20 l4 4 8-9"/><path d="M510 53 l4 4 8-9"/><path d="M510 86 l4 4 8-9"/></g>
</svg>
<div id="kmrib">
<div class="t" style="left:840px;top:144px;font-size:20px;color:#111">新建工艺</div>
<div class="t" style="left:966px;top:144px;font-size:20px;color:#111">自动识别</div>
<div class="t" style="left:966px;top:195px;font-size:20px;color:#8194ab">智能拾取</div>
<div class="t" style="left:1059px;top:144px;font-size:20px;color:#111">手动拾取</div>
<div class="t" style="left:1140px;top:195px;font-size:20px;color:#8194ab">特征</div>
<div class="t" style="left:1285px;top:144px;font-size:20px;color:#111;letter-spacing:0.5px">PMI</div>
<div class="t" style="left:1361px;top:92px;font-size:20px;color:#111;letter-spacing:-1.2px">BOF</div>
<div class="t" style="left:1361px;top:125px;font-size:20px;color:#111;letter-spacing:-1.2px">BOP</div>
<div class="t" style="left:1359px;top:158px;font-size:20px;color:#111">属性</div>
<div class="t" style="left:1433px;top:92px;font-size:20px;color:#111">浏览</div>
<div class="t" style="left:1433px;top:125px;font-size:20px;color:#111">视图跟随</div>
<div class="t" style="left:1353px;top:195px;font-size:20px;color:#8194ab">显示/隐藏</div>
<div class="t" style="left:1532px;top:92px;font-size:20px;color:#111">互动高亮</div>
<div class="t" style="left:1532px;top:125px;font-size:20px;color:#111">识别报告</div>
<div class="t" style="left:1532px;top:158px;font-size:20px;color:#111">特征高亮</div>
<div class="t" style="left:1554px;top:195px;font-size:20px;color:#8194ab">辅助</div>
</div>

<!-- ================= PANELS ================= -->
<div class="a" style="left:830px;top:225px;width:316px;height:31px;background:linear-gradient(#c2cedc,#d7e3f0)"></div>
<div class="a" style="left:1150px;top:225px;width:474px;height:31px;background:linear-gradient(#c2cedc,#d7e3f0)"></div>
<div class="a" style="left:1146px;top:223px;width:4px;height:702px;background:#fff"></div>
<div class="a" style="left:830px;top:256px;width:794px;height:2px;background:#fff"></div>
<div class="t" style="left:834px;top:231px;font-size:19px;color:#111">特征工艺(BOF)</div>
<div class="t" style="left:1154px;top:231px;font-size:19px;color:#111">属性区</div>
<svg style="left:1100px;top:230px" width="46" height="24"><path d="M6 2 h7 v9 h3 v2 h-5 v7 h-2 v-7 h-5 v-2 h2z" fill="#111"/><rect x="25" y="3" width="17" height="16.5" fill="#c84c4c"/><path d="M30.5 8.5 l6 6 M36.5 8.5 l-6 6" stroke="#fff" stroke-width="1.8"/></svg>
<div class="a" style="left:830px;top:258px;width:316px;height:667px;background:#fff;border-top:1px solid #a8a8a8;border-left:1px solid #c8c8c8"></div>
<div class="a" style="left:1118px;top:259px;width:27px;height:666px;background:#f0f0f0"></div>
<div class="a" style="left:1145px;top:258px;width:1px;height:667px;background:#a8a8a8"></div>
<div class="a" style="left:1118px;top:287px;width:24px;height:510px;background:#cdcdcd"></div>
<div class="a" style="left:1118px;top:797px;width:24px;height:87px;background:#cdcdcd"></div>
<svg style="left:1118px;top:262px" width="24" height="24"><path d="M6 16 l6-6 6 6" fill="none" stroke="#606060" stroke-width="2.4"/></svg>
<svg style="left:830px;top:258px" width="290" height="667"><defs><linearGradient id="expg" x1="0" y1="0" x2="0" y2="1"><stop offset="0" stop-color="#fff"/><stop offset="0.5" stop-color="#f4f4f4"/><stop offset="0.55" stop-color="#e0e0e0"/><stop offset="1" stop-color="#dcdcdc"/></linearGradient></defs><line x1="33.5" y1="20" x2="33.5" y2="667" stroke="#555" stroke-width="1" stroke-dasharray="1 1"/><line x1="52.5" y1="80.5" x2="52.5" y2="113.5" stroke="#555" stroke-width="1" stroke-dasharray="1 1"/><line x1="52.5" y1="560.5" x2="52.5" y2="593.5" stroke="#555" stroke-width="1" stroke-dasharray="1 1"/><line x1="52.5" y1="620.5" x2="52.5" y2="653.5" stroke="#555" stroke-width="1" stroke-dasharray="1 1"/><line x1="52.5" y1="513.5" x2="52.5" y2="533.5" stroke="#555" stroke-width="1" stroke-dasharray="1 1"/><rect x="8.549999999999955" y="7.75" width="11.5" height="11.5" rx="1.5" fill="url(#expg)" stroke="#8c8c8c" stroke-width="1"/><line x1="9.799999999999955" y1="13.5" x2="18.799999999999955" y2="13.5" stroke="#2c4a9a" stroke-width="1.2"/><line x1="22" y1="13.5" x2="25" y2="13.5" stroke="#555" stroke-width="1" stroke-dasharray="1 1"/><g transform="translate(25,4.5)"><path d="M10 2 h6 v5 l-1 1 v4 l1 1 v2 l-2 3 h-3 l-2-3 v-2 l1-1 v-4 l-1-1z" fill="#22d3e8"/><rect x="9" y="1" width="7" height="2" fill="#f0f"/><rect x="8.5" y="8" width="8" height="1.6" fill="#1890b8"/><circle cx="4.5" cy="13" r="4.3" fill="#1a78d0"/><circle cx="3" cy="13" r="1.6" fill="#8fd0ff"/><path d="M1 9 l2-2 h3 l2 2" fill="none" stroke="#f0f" stroke-width="1.4"/></g><rect x="27.75" y="27.75" width="11.5" height="11.5" rx="1.5" fill="url(#expg)" stroke="#8c8c8c" stroke-width="1"/><line x1="29.0" y1="33.5" x2="38.0" y2="33.5" stroke="#2c4a9a" stroke-width="1.2"/><line x1="33.5" y1="29.0" x2="33.5" y2="38.0" stroke="#2c4a9a" stroke-width="1.2"/><line x1="40" y1="33.5" x2="46" y2="33.5" stroke="#555" stroke-width="1" stroke-dasharray="1 1"/><g transform="translate(46,27.0)"><path d="M0.5 0.5 h5 v3 h2 v2 h3 v5 h-6 v1 h-4z" fill="#078" stroke="#000" stroke-width="1"/><path d="M3.5 3.5 h5 v3 h2 v2 h0 v4.5 h-7.5z" fill="#0ff" stroke="#000" stroke-width="1.4"/></g><rect x="27.75" y="47.75" width="11.5" height="11.5" rx="1.5" fill="url(#expg)" stroke="#8c8c8c" stroke-width="1"/><line x1="29.0" y1="53.5" x2="38.0" y2="53.5" stroke="#2c4a9a" stroke-width="1.2"/><line x1="33.5" y1="49.0" x2="33.5" y2="58.0" stroke="#2c4a9a" stroke-width="1.2"/><line x1="40" y1="53.5" x2="46" y2="53.5" stroke="#555" stroke-width="1" stroke-dasharray="1 1"/><g transform="translate(46,47.0)"><path d="M0.5 0.5 h5 v3 h2 v2 h3 v5 h-6 v1 h-4z" fill="#078" stroke="#000" stroke-width="1"/><path d="M3.5 3.5 h5 v3 h2 v2 h0 v4.5 h-7.5z" fill="#0ff" stroke="#000" stroke-width="1.4"/></g><rect x="27.75" y="67.75" width="11.5" height="11.5" rx="1.5" fill="url(#expg)" stroke="#8c8c8c" stroke-width="1"/><line x1="29.0" y1="73.5" x2="38.0" y2="73.5" stroke="#2c4a9a" stroke-width="1.2"/><line x1="40" y1="73.5" x2="46" y2="73.5" stroke="#555" stroke-width="1" stroke-dasharray="1 1"/><g transform="translate(46,67.0)"><path d="M0.5 0.5 h5 v3 h2 v2 h3 v5 h-6 v1 h-4z" fill="#078" stroke="#000" stroke-width="1"/><path d="M3.5 3.5 h5 v3 h2 v2 h0 v4.5 h-7.5z" fill="#0ff" stroke="#000" stroke-width="1.4"/></g><line x1="53" y1="93.5" x2="63" y2="93.5" stroke="#555" stroke-width="1" stroke-dasharray="1 1"/><g transform="translate(63,85.5)"><rect x="0.5" y="3.5" width="9" height="9" fill="#e8f07a" stroke="#bbb"/><rect x="2" y="5" width="5" height="5" fill="#9ad850" stroke="#6ab030" stroke-width="0.6"/><rect x="9.5" y="9.5" width="6" height="6" fill="#b8f0a0" stroke="#bbb"/><rect x="10.5" y="10.5" width="4" height="4" fill="#5ad050"/><path d="M6 3 l3.5 4 6-7" fill="none" stroke="#f00" stroke-width="1.5"/><path d="M8 8 l2 4" stroke="#0a0" stroke-width="1.2"/></g><line x1="53" y1="113.5" x2="63" y2="113.5" stroke="#555" stroke-width="1" stroke-dasharray="1 1"/><g transform="translate(63,105.5)"><rect x="0.5" y="3.5" width="9" height="9" fill="#e8f07a" stroke="#bbb"/><rect x="2" y="5" width="5" height="5" fill="#9ad850" stroke="#6ab030" stroke-width="0.6"/><rect x="9.5" y="9.5" width="6" height="6" fill="#b8f0a0" stroke="#bbb"/><rect x="10.5" y="10.5" width="4" height="4" fill="#5ad050"/><path d="M6 3 l3.5 4 6-7" fill="none" stroke="#f00" stroke-width="1.5"/><path d="M8 8 l2 4" stroke="#0a0" stroke-width="1.2"/></g><line x1="53" y1="533.5" x2="63" y2="533.5" stroke="#555" stroke-width="1" stroke-dasharray="1 1"/><g transform="translate(63,525.5)"><rect x="0.5" y="3.5" width="9" height="9" fill="#e8f07a" stroke="#bbb"/><rect x="2" y="5" width="5" height="5" fill="#9ad850" stroke="#6ab030" stroke-width="0.6"/><rect x="9.5" y="9.5" width="6" height="6" fill="#b8f0a0" stroke="#bbb"/><rect x="10.5" y="10.5" width="4" height="4" fill="#5ad050"/><path d="M6 3 l3.5 4 6-7" fill="none" stroke="#f00" stroke-width="1.5"/><path d="M8 8 l2 4" stroke="#0a0" stroke-width="1.2"/></g><rect x="27.75" y="547.75" width="11.5" height="11.5" rx="1.5" fill="url(#expg)" stroke="#8c8c8c" stroke-width="1"/><line x1="29.0" y1="553.5" x2="38.0" y2="553.5" stroke="#2c4a9a" stroke-width="1.2"/><line x1="40" y1="553.5" x2="46" y2="553.5" stroke="#555" stroke-width="1" stroke-dasharray="1 1"/><g transform="translate(46,547.0)"><path d="M0.5 0.5 h5 v3 h2 v2 h3 v5 h-6 v1 h-4z" fill="#078" stroke="#000" stroke-width="1"/><path d="M3.5 3.5 h5 v3 h2 v2 h0 v4.5 h-7.5z" fill="#0ff" stroke="#000" stroke-width="1.4"/></g><line x1="53" y1="573.5" x2="63" y2="573.5" stroke="#555" stroke-width="1" stroke-dasharray="1 1"/><g transform="translate(63,565.5)"><rect x="0.5" y="3.5" width="9" height="9" fill="#e8f07a" stroke="#bbb"/><rect x="2" y="5" width="5" height="5" fill="#9ad850" stroke="#6ab030" stroke-width="0.6"/><rect x="9.5" y="9.5" width="6" height="6" fill="#b8f0a0" stroke="#bbb"/><rect x="10.5" y="10.5" width="4" height="4" fill="#5ad050"/><path d="M6 3 l3.5 4 6-7" fill="none" stroke="#f00" stroke-width="1.5"/><path d="M8 8 l2 4" stroke="#0a0" stroke-width="1.2"/></g><line x1="53" y1="593.5" x2="63" y2="593.5" stroke="#555" stroke-width="1" stroke-dasharray="1 1"/><g transform="translate(63,585.5)"><rect x="0.5" y="3.5" width="9" height="9" fill="#e8f07a" stroke="#bbb"/><rect x="2" y="5" width="5" height="5" fill="#9ad850" stroke="#6ab030" stroke-width="0.6"/><rect x="9.5" y="9.5" width="6" height="6" fill="#b8f0a0" stroke="#bbb"/><rect x="10.5" y="10.5" width="4" height="4" fill="#5ad050"/><path d="M6 3 l3.5 4 6-7" fill="none" stroke="#f00" stroke-width="1.5"/><path d="M8 8 l2 4" stroke="#0a0" stroke-width="1.2"/></g><rect x="27.75" y="607.75" width="11.5" height="11.5" rx="1.5" fill="url(#expg)" stroke="#8c8c8c" stroke-width="1"/><line x1="29.0" y1="613.5" x2="38.0" y2="613.5" stroke="#2c4a9a" stroke-width="1.2"/><line x1="40" y1="613.5" x2="46" y2="613.5" stroke="#555" stroke-width="1" stroke-dasharray="1 1"/><g transform="translate(46,607.0)"><path d="M0.5 0.5 h5 v3 h2 v2 h3 v5 h-6 v1 h-4z" fill="#078" stroke="#000" stroke-width="1"/><path d="M3.5 3.5 h5 v3 h2 v2 h0 v4.5 h-7.5z" fill="#0ff" stroke="#000" stroke-width="1.4"/></g><line x1="53" y1="633.5" x2="63" y2="633.5" stroke="#555" stroke-width="1" stroke-dasharray="1 1"/><g transform="translate(63,625.5)"><rect x="0.5" y="3.5" width="9" height="9" fill="#e8f07a" stroke="#bbb"/><rect x="2" y="5" width="5" height="5" fill="#9ad850" stroke="#6ab030" stroke-width="0.6"/><rect x="9.5" y="9.5" width="6" height="6" fill="#b8f0a0" stroke="#bbb"/><rect x="10.5" y="10.5" width="4" height="4" fill="#5ad050"/><path d="M6 3 l3.5 4 6-7" fill="none" stroke="#f00" stroke-width="1.5"/><path d="M8 8 l2 4" stroke="#0a0" stroke-width="1.2"/></g><line x1="53" y1="653.5" x2="63" y2="653.5" stroke="#555" stroke-width="1" stroke-dasharray="1 1"/><g transform="translate(63,645.5)"><rect x="0.5" y="3.5" width="9" height="9" fill="#e8f07a" stroke="#bbb"/><rect x="2" y="5" width="5" height="5" fill="#9ad850" stroke="#6ab030" stroke-width="0.6"/><rect x="9.5" y="9.5" width="6" height="6" fill="#b8f0a0" stroke="#bbb"/><rect x="10.5" y="10.5" width="4" height="4" fill="#5ad050"/><path d="M6 3 l3.5 4 6-7" fill="none" stroke="#f00" stroke-width="1.5"/><path d="M8 8 l2 4" stroke="#0a0" stroke-width="1.2"/></g><rect x="27.75" y="667.75" width="11.5" height="11.5" rx="1.5" fill="url(#expg)" stroke="#8c8c8c" stroke-width="1"/><line x1="29.0" y1="673.5" x2="38.0" y2="673.5" stroke="#2c4a9a" stroke-width="1.2"/><line x1="40" y1="673.5" x2="46" y2="673.5" stroke="#555" stroke-width="1" stroke-dasharray="1 1"/><g transform="translate(46,667.0)"><path d="M0.5 0.5 h5 v3 h2 v2 h3 v5 h-6 v1 h-4z" fill="#078" stroke="#000" stroke-width="1"/><path d="M3.5 3.5 h5 v3 h2 v2 h0 v4.5 h-7.5z" fill="#0ff" stroke="#000" stroke-width="1.4"/></g></svg>
<div class="a" style="left:874px;top:261px;width:85px;height:20px;background:#0078d7"></div>
<div class="t" style="left:876px;top:261.0px;font-size:20px;color:#fff">齿轮轴_jt</div>
<div class="t" style="left:896px;top:281.0px;font-size:20px;color:#404040">回转面系1</div>
<div class="t" style="left:896px;top:301.0px;font-size:20px;color:#404040">孔系1</div>
<div class="t" style="left:896px;top:321.0px;font-size:20px;color:#404040">单纯底凹槽1</div>
<div class="t" style="left:914px;top:341.0px;font-size:20px;color:#404040">粗铣</div>
<div class="t" style="left:914px;top:361.0px;font-size:20px;color:#404040">半精铣</div>
<div class="t" style="left:914px;top:781.0px;font-size:20px;color:#404040">半精铣</div>
<div class="t" style="left:896px;top:801.0px;font-size:20px;color:#404040">矩形底凹槽5</div>
<div class="t" style="left:914px;top:821.0px;font-size:20px;color:#404040">粗铣</div>
<div class="t" style="left:914px;top:841.0px;font-size:20px;color:#404040">半精铣</div>
<div class="t" style="left:896px;top:861.0px;font-size:20px;color:#404040">均布齿槽1</div>
<div class="t" style="left:914px;top:881.0px;font-size:20px;color:#404040">粗铣</div>
<div class="t" style="left:914px;top:901.0px;font-size:20px;color:#404040">半精铣</div>
<div class="t" style="left:896px;top:921.0px;font-size:20px;color:#404040">均布齿槽2</div>
<div class="a" style="left:1150px;top:258px;width:474px;height:667px;background:#f0f0f0;border-left:2px solid #6e6e6e;border-top:1px solid #6e6e6e"></div>
<div class="t" style="left:1157px;top:267px;font-size:14px;color:#333">名称:</div>
<div class="a" style="left:1200px;top:264px;width:430px;height:20px;background:#fff;border:1px solid #7a7a7a;overflow:hidden"><div class="t" style="left:3px;top:6px;font-size:19px;color:#111">齿轮轴_jt</div></div>
<div class="a" style="left:1157px;top:295px;width:467px;height:630px;background:#e8e8e8"></div>
<div class="a" style="left:1161px;top:295px;width:463px;height:362px;background:#fff;border-top:1px solid #a0a0a0"></div>
<div class="a" style="left:1157px;top:657px;width:467px;height:12px;background:#ebebeb"></div>
<div class="a" style="left:1157px;top:669px;width:467px;height:1px;background:#6a6a6a"></div>
<div class="a" style="left:1157px;top:670px;width:467px;height:5px;background:#e4e4e4"></div>
<div class="a" style="left:1157px;top:675px;width:467px;height:1px;background:#6a6a6a"></div>
<div class="a" style="left:1157px;top:676px;width:467px;height:75px;background:#f0f0f0"></div>
<div class="a" style="left:1157px;top:709px;width:467px;height:1px;background:#fff"></div>
<div class="a" style="left:1157px;top:751px;width:467px;height:1px;background:#6a6a6a"></div>
<div class="a" style="left:1157px;top:752px;width:467px;height:173px;background:#fff"></div>
<div class="a" style="left:1152px;top:752px;width:5px;height:173px;background:#fff"></div><div class="a" style="left:1153px;top:259px;width:1px;height:666px;background:#d0d0d0"></div>
<div class="a" style="left:1161px;top:329px;width:463px;height:1.5px;background:#6a6a6a"></div>
<div class="a" style="left:1161px;top:362px;width:463px;height:1.5px;background:#6a6a6a"></div>
<div class="a" style="left:1161px;top:395px;width:463px;height:1.5px;background:#6a6a6a"></div>
<div class="a" style="left:1161px;top:428px;width:463px;height:1.5px;background:#6a6a6a"></div>
<div class="a" style="left:1259px;top:296px;width:1.5px;height:361px;background:#6a6a6a"></div>
<div class="t" style="left:1168px;top:302px;font-size:20px;color:#777">零件类型</div>
<div class="t" style="left:1265px;top:302px;font-size:20px;color:#777">箱体</div>
<div class="t" style="left:1168px;top:335px;font-size:20px;color:#777">零件图号</div>
<div class="t" style="left:1265px;top:401px;font-size:20px;color:#333">齿轮轴_jt.prt</div>
<!-- ================= DIALOG ================= -->
<div class="a" style="left:853px;top:366px;width:488px;height:432px;background:#f0f0f0;box-shadow:0 0 1px rgba(0,0,0,0.12)"></div>
<div class="a" style="left:853px;top:366px;width:488px;height:30px;background:#fff"></div>
<div class="t" style="left:853px;top:371px;font-size:16px;color:#111">分组模板</div>
<svg style="left:1310px;top:368px" width="24" height="24"><path d="M5.5 4.5 L17.5 16.5 M17.5 4.5 L5.5 16.5" stroke="#111" stroke-width="1.3"/></svg>
<div class="a" style="left:882px;top:472px;width:363px;height:268px;border:1px solid #dcdcdc"></div>
<div class="a" style="left:890px;top:462px;width:36px;height:18px;background:#f0f0f0"></div>
<div class="t" style="left:893px;top:463px;font-size:16px;color:#111">模板</div>
<div class="a" style="left:884px;top:479px;width:359px;height:259px;background:#fff;border-top:1px solid #646464;border-left:1px solid #646464;border-right:1px solid #646464;border-bottom:2px solid #5a5a5a;overflow:hidden">
  <div class="a" style="left:335px;top:0;width:21px;height:258px;background:#f0f0f0"></div>
  <div class="a" style="left:336px;top:24px;width:20px;height:191px;background:#cdcdcd"></div>
  <svg style="left:335px;top:0" width="21" height="258"><path d="M5 16 l5.5-5.5 5.5 5.5" fill="none" stroke="#606060" stroke-width="2.2"/><path d="M5 240.5 l5.5 5.5 5.5-5.5" fill="none" stroke="#606060" stroke-width="2.2"/></svg>
  <div id="lb">
  <div class="t" style="left:6px;top:5px;font-size:16px;color:#111">侧面铣削</div>
  <div class="t" style="left:6px;top:29px;font-size:16px;color:#111">六面加工</div>
  <div class="t" style="left:6px;top:52px;font-size:16px;color:#111">单面加工</div>
  <div class="t" style="left:6px;top:76px;font-size:16px;color:#111">单面钻孔</div>
  <div class="t" style="left:6px;top:100px;font-size:16px;color:#111">单面铣削</div>
  <div class="t" style="left:6px;top:124px;font-size:16px;color:#111">多方向加工</div>
  <div class="t" style="left:6px;top:147px;font-size:16px;color:#111">正反面加工</div>
  <div class="t" style="left:6px;top:171px;font-size:16px;color:#111">正反面钻孔</div>
  <div class="t" style="left:6px;top:195px;font-size:16px;color:#111">正反面铣削</div>
  <div class="t" style="left:6px;top:219px;font-size:16px;color:#111">组合加工</div>
  <div class="t" style="left:6px;top:242px;font-size:16px;color:#111">车削</div>
  </div>
</div>
<svg style="left:938px;top:486px" width="16" height="22"><path d="M1.5 1.5 v16 l4-4 3 6 2-1 -3-6 h5.5z" fill="#fff" stroke="#111" stroke-width="1.2" stroke-linejoin="round"/></svg>
<div class="a" style="left:1040px;top:754px;width:93px;height:28px;background:#e1e1e1;border:2px solid #0078d7"></div>
<div class="t" style="left:1070px;top:759px;font-size:16px;color:#111">确定</div>
<div class="a" style="left:1151px;top:754px;width:93px;height:28px;background:#e1e1e1;border:1px solid #adadad"></div>
<div class="t" style="left:1181px;top:759px;font-size:16px;color:#111">取消</div>

</body></html>
